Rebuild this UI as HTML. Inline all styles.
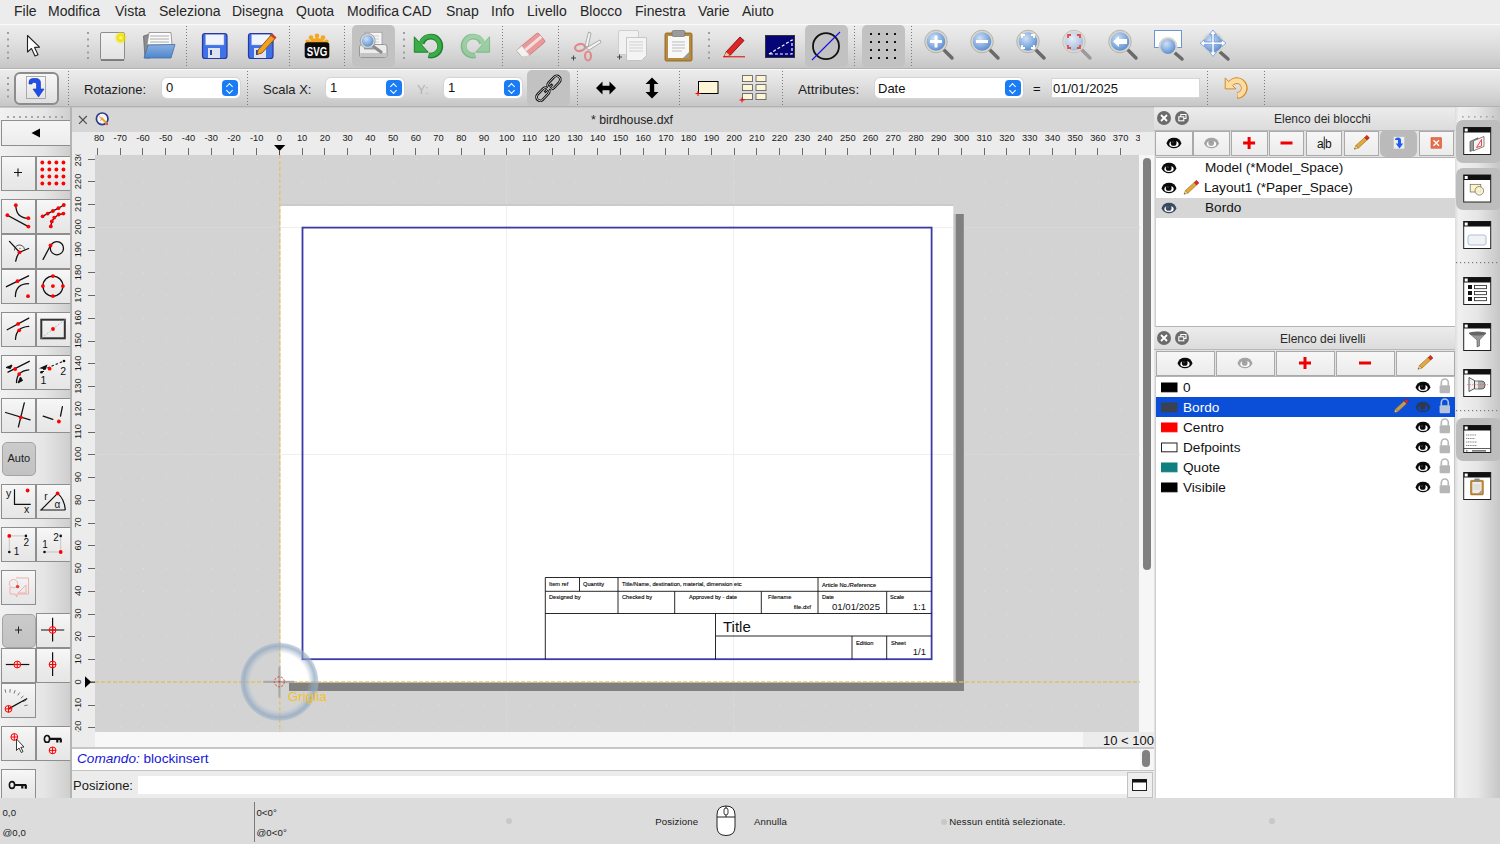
<!DOCTYPE html>
<html><head><meta charset="utf-8">
<style>
*{box-sizing:border-box;margin:0;padding:0}
html,body{width:1500px;height:844px;overflow:hidden;background:#ececec;font-family:"Liberation Sans",sans-serif;color:#222}
.a{position:absolute}
.t{position:absolute;white-space:nowrap;line-height:1}
#menubar{left:0;top:0;width:1500px;height:24px;background:#ececec}
#menubar .t{font-size:14px;top:4px;color:#262626}
#tb1{left:0;top:24px;width:1500px;height:45px;background:linear-gradient(#ededed,#e2e2e2 35%,#d2d2d2 75%,#c6c6c6);border-top:1px solid #fafafa;border-bottom:1px solid #b2b2b2}
#tb2{left:0;top:69px;width:1500px;height:38px;background:linear-gradient(#ececec,#e2e2e2 35%,#d2d2d2 75%,#c6c6c6);border-top:1px solid #fafafa;border-bottom:1px solid #b2b2b2}
.sep{position:absolute;width:0;border-left:2px dotted #9a9a9a}
.hdl{position:absolute;width:0;border-left:3px dotted #9a9a9a}
.pressed{position:absolute;background:#c4c4c4;border-radius:5px}
.spin{position:absolute;background:#fff;border-radius:5px;box-shadow:0 0 0 1px #d4d4d4}
.spinb{position:absolute;right:1px;top:1px;bottom:1px;width:17px;background:#1a7cf5;border-radius:4px}
.spinb:before,.spinb:after{content:"";position:absolute;left:5px;width:4px;height:4px;border-left:1.5px solid #fff;border-top:1.5px solid #fff}
.spinb:before{top:3.5px;transform:rotate(45deg)}
.spinb:after{bottom:3.5px;transform:rotate(225deg)}
#leftdock{left:0;top:107px;width:72px;height:693px;background:linear-gradient(90deg,#f1f1f1,#e6e6e6 60%,#cdcdcd)}
.lb{position:absolute;width:33px;height:34px;background:linear-gradient(#f6f6f6,#e9e9e9);border:1px solid #9c9c9c}
#mdi{left:72px;top:107px;width:1082px;height:691px;background:#d4d4d4}
#rightdock{left:1154px;top:107px;width:301px;height:691px;background:#e4e4e4}
#rtb{left:1455px;top:107px;width:45px;height:691px;background:linear-gradient(90deg,#ececec,#e2e2e2 50%,#c9c9c9)}
#status{left:0;top:798px;width:1500px;height:46px;background:#dcdcdc}
</style></head><body>
<!-- MENU -->
<div id="menubar" class="a">
<span class="t" style="left:14px">File</span>
<span class="t" style="left:48px">Modifica</span>
<span class="t" style="left:115px">Vista</span>
<span class="t" style="left:159px">Seleziona</span>
<span class="t" style="left:232px">Disegna</span>
<span class="t" style="left:296px">Quota</span>
<span class="t" style="left:347px;word-spacing:-1px">Modifica CAD</span>
<span class="t" style="left:446px">Snap</span>
<span class="t" style="left:491px">Info</span>
<span class="t" style="left:527px">Livello</span>
<span class="t" style="left:580px">Blocco</span>
<span class="t" style="left:635px">Finestra</span>
<span class="t" style="left:698px">Varie</span>
<span class="t" style="left:742px">Aiuto</span>
</div>
<!-- TOOLBAR 1 -->
<div id="tb1" class="a"></div>
<svg class="a" style="left:0;top:24px" width="1500" height="45" viewBox="0 24 1500 45">
<defs>
<radialGradient id="glow"><stop offset="0" stop-color="#ffff9a"/><stop offset=".45" stop-color="#f0e000"/><stop offset="1" stop-color="#f0e000" stop-opacity="0"/></radialGradient>
<linearGradient id="pg" x1="0" y1="0" x2="0" y2="1"><stop offset="0" stop-color="#f4f4f4"/><stop offset="1" stop-color="#e2e2e2"/></linearGradient>
<linearGradient id="fb" x1="0" y1="0" x2="0" y2="1"><stop offset="0" stop-color="#8ab0e0"/><stop offset="1" stop-color="#4f86cc"/></linearGradient>
<radialGradient id="lens" cx=".4" cy=".35" r=".7"><stop offset="0" stop-color="#cfe0f6"/><stop offset=".6" stop-color="#7fa9de"/><stop offset="1" stop-color="#4f82c8"/></radialGradient>
<radialGradient id="lensd" cx=".4" cy=".35" r=".7"><stop offset="0" stop-color="#e6eef8"/><stop offset=".6" stop-color="#b8cbe6"/><stop offset="1" stop-color="#9cb4d8"/></radialGradient>
<g id="mag"><line x1="0" y1="0" x2="10" y2="10" stroke="#666" stroke-width="4" stroke-linecap="round"/></g>
</defs>
<!-- handles -->
<g fill="#9d9d9d"><rect x="7" y="32" width="2" height="2"/><rect x="7" y="38.5" width="2" height="2"/><rect x="7" y="45" width="2" height="2"/><rect x="7" y="51.5" width="2" height="2"/><rect x="7" y="57" width="2" height="2"/>
<rect x="87" y="32" width="2" height="2"/><rect x="87" y="38.5" width="2" height="2"/><rect x="87" y="45" width="2" height="2"/><rect x="87" y="51.5" width="2" height="2"/><rect x="87" y="57" width="2" height="2"/>
<rect x="403" y="32" width="2" height="2"/><rect x="403" y="38.5" width="2" height="2"/><rect x="403" y="45" width="2" height="2"/><rect x="403" y="51.5" width="2" height="2"/><rect x="403" y="57" width="2" height="2"/>
<rect x="708" y="32" width="2" height="2"/><rect x="708" y="38.5" width="2" height="2"/><rect x="708" y="45" width="2" height="2"/><rect x="708" y="51.5" width="2" height="2"/><rect x="708" y="57" width="2" height="2"/>
</g>
<!-- separators -->
<g stroke="#7a7a7a" stroke-width="1" stroke-dasharray="1 2">
<line x1="186.5" y1="26" x2="186.5" y2="67"/><line x1="289.5" y1="26" x2="289.5" y2="67"/><line x1="344.5" y1="26" x2="344.5" y2="67"/>
<line x1="502.5" y1="26" x2="502.5" y2="67"/><line x1="558.5" y1="26" x2="558.5" y2="67"/>
<line x1="854.5" y1="26" x2="854.5" y2="67"/><line x1="911.5" y1="26" x2="911.5" y2="67"/>
</g>
<!-- pressed backgrounds -->
<rect x="352" y="25" width="43" height="42" rx="5" fill="#c2c2c2"/>
<rect x="805" y="25" width="43" height="42" rx="5" fill="#c2c2c2"/>
<rect x="862" y="25" width="43" height="42" rx="5" fill="#c2c2c2"/>
<!-- arrow cursor -->
<path d="M27.5 35.5 L27.5 52 L31.5 48.5 L35 56 L38 54.8 L34.6 47.4 L39.5 47.2 Z" fill="#fff" stroke="#222" stroke-width="1.1" stroke-linejoin="round"/>
<!-- new doc -->
<rect x="100.5" y="32.5" width="24" height="27.5" rx="1.5" fill="url(#pg)" stroke="#8c8c8c"/>
<line x1="101" y1="60" x2="124" y2="60" stroke="#6e6e6e" stroke-width="1.5"/>
<circle cx="120.7" cy="37.7" r="6.5" fill="url(#glow)"/>
<!-- open folder -->
<path d="M143.5 36 L150 34 L150 58 L145 58 Z" fill="#8c8c8c" stroke="#666" stroke-width=".8"/>
<path d="M149 32.5 L171 32.5 L172 45 L147 45 Z" fill="#fbfbfb" stroke="#888" stroke-width=".8"/>
<path d="M150 36 h19 M150 39 h19 M150 42 h19" stroke="#aaa" stroke-width="1"/>
<path d="M148 45 L175 44.5 L171 58 L144 58 Z" fill="url(#fb)" stroke="#3f6eaa" stroke-width=".8"/>
<!-- save -->
<g>
<rect x="202.5" y="33.5" width="24.5" height="25" rx="2.5" fill="#3f72e6" stroke="#2937a0" stroke-width="1.2"/>
<rect x="205.5" y="34.5" width="18.5" height="10.5" fill="#f2f4fb" stroke="#8aa0d8" stroke-width=".5"/>
<rect x="208" y="48" width="12" height="10" fill="#dfe3ee"/>
<rect x="210" y="50" width="2" height="5" fill="#2343b0"/>
</g>
<g>
<rect x="248.5" y="33.5" width="24.5" height="25" rx="2.5" fill="#3f72e6" stroke="#2937a0" stroke-width="1.2"/>
<rect x="251.5" y="34.5" width="18.5" height="10.5" fill="#f2f4fb" stroke="#8aa0d8" stroke-width=".5"/>
<rect x="254" y="48" width="12" height="10" fill="#dfe3ee"/>
<rect x="256" y="50" width="2" height="5" fill="#2343b0"/>
<path d="M258 50 L272 34 L276 37.5 L262 53 L257 54.5 Z" fill="#f2a020" stroke="#8a4a10" stroke-width=".9"/>
<path d="M272 34 L276 37.5 L274.5 39 L270.5 35.6 Z" fill="#e03030"/>
</g>
<!-- SVG -->
<g>
<g fill="#f6a620"><circle cx="317" cy="35.8" r="2.3"/><circle cx="311" cy="37.6" r="2.3"/><circle cx="323" cy="37.6" r="2.3"/><circle cx="307.6" cy="41.6" r="2.2"/><circle cx="326.4" cy="41.6" r="2.2"/></g>
<path d="M317 44 L317 36 M317 44 L311 38 M317 44 L323 38 M317 44 L307.6 42 M317 44 L326.4 42" stroke="#f6a620" stroke-width="2.2"/>
<path d="M309 44 A8 6 0 0 1 325 44 Z" fill="#f6a620"/>
<rect x="304.7" y="42.3" width="24.6" height="16" rx="2.8" fill="#0b0b0b"/>
<text x="317" y="55.8" font-family="Liberation Sans" font-weight="bold" font-size="13" fill="#fff" text-anchor="middle" textLength="20.5" lengthAdjust="spacingAndGlyphs">SVG</text>
</g>
<!-- print preview -->
<g>
<rect x="365" y="32.3" width="17" height="14" fill="#f6f6f6" stroke="#a0a0a0" stroke-width=".8"/>
<path d="M368 36h11M368 39h11M368 42h11" stroke="#c8c8c8" stroke-width=".8"/>
<path d="M359.5 47 Q359.5 44.5 362 44.5 L384.5 44.5 Q387 44.5 387 47 L387 55 Q387 57.5 384.5 57.5 L362 57.5 Q359.5 57.5 359.5 55 Z" fill="#ececec" stroke="#8e8e8e" stroke-width=".9"/>
<rect x="360.2" y="53" width="26.2" height="4" fill="#c4c4c4"/>
<rect x="364" y="48" width="10" height="1.4" fill="#9a9a9a"/>
<line x1="372" y1="45.5" x2="381" y2="52" stroke="#8a8a8a" stroke-width="3.2" stroke-linecap="round"/>
<circle cx="367.7" cy="40.9" r="6.6" fill="url(#lens)" stroke="#d8d8d0" stroke-width="1.6"/>
<circle cx="367.7" cy="40.9" r="7.5" fill="none" stroke="#8a8f96" stroke-width=".7"/>
</g>
<!-- undo -->
<g>
<path d="M421.6 43.6 A9.5 9.5 0 1 1 428.5 55.3" fill="none" stroke="#1f8030" stroke-width="5.8"/>
<path d="M414.3 36.8 L414.3 52.2 L428.2 52.2 Z" fill="#3aac48" stroke="#1f8030" stroke-width="1" stroke-linejoin="round"/>
<path d="M420.8 44.5 A9.5 9.5 0 1 1 429 55.3" fill="none" stroke="#3aac48" stroke-width="3.8"/>
</g>
<g transform="translate(903.85 0) scale(-1 1)" opacity=".5">
<path d="M421.6 43.6 A9.5 9.5 0 1 1 428.5 55.3" fill="none" stroke="#2a9a3a" stroke-width="5.8"/>
<path d="M414.3 36.8 L414.3 52.2 L428.2 52.2 Z" fill="#5cc06a" stroke="#2a9a3a" stroke-width="1" stroke-linejoin="round"/>
<path d="M420.8 44.5 A9.5 9.5 0 1 1 429 55.3" fill="none" stroke="#5cc06a" stroke-width="3.8"/>
</g>
<!-- eraser -->
<g transform="rotate(-40 531 46)"><rect x="517" y="40" width="28" height="12" rx="2" fill="#e89a9a" stroke="#c77" stroke-width=".8"/><rect x="517" y="40" width="7" height="12" fill="#f2f2f2" stroke="#bbb" stroke-width=".6"/><rect x="524" y="44" width="21" height="3" fill="#f6dede"/></g>
<ellipse cx="531" cy="57" rx="10" ry="1.5" fill="#d0d0d0"/>
<!-- scissors -->
<g fill="none" stroke="#e08a8a" stroke-width="2.2"><ellipse cx="580" cy="47.5" rx="5" ry="3.5" transform="rotate(-10 580 47.5)"/><ellipse cx="588" cy="56" rx="3" ry="4.5"/></g>
<path d="M585 46 L588.5 32 L591 33 L588 47 Z M586 48 L600 40 L601 42.5 L589 50 Z" fill="#f4f4f4" stroke="#9a9a9a" stroke-width=".8"/>
<path d="M571 58 h5 M573.5 55.5 v5" stroke="#444" stroke-width="1"/>
<!-- copy -->
<rect x="618.5" y="30.5" width="20" height="24" rx="1.5" fill="#f1f1f1" stroke="#c6c6c6" stroke-width=".8"/>
<path d="M626.5 37.5 h20 v18 l-5 5 h-15 Z" fill="#f4f4f4" stroke="#bdbdbd" stroke-width=".8"/>
<path d="M629 42 h14 M629 45 h14 M629 48 h14 M629 51 h14" stroke="#cfcfcf" stroke-width="1"/>
<path d="M617 57 h5 M619.5 54.5 v5" stroke="#444" stroke-width="1"/>
<!-- paste -->
<rect x="665" y="33" width="27" height="28" rx="1.5" fill="#b98a3c" stroke="#7e5a20" stroke-width=".8"/>
<rect x="668" y="36" width="21" height="22" fill="#f8f8f8"/>
<rect x="672" y="30.5" width="13" height="6" rx="1.5" fill="#9a9a9a" stroke="#666" stroke-width=".6"/>
<path d="M672 42 h13 M672 45 h13 M672 48 h13 M672 51 h10" stroke="#bbb" stroke-width="1"/>
<path d="M683 58 L689 52 L689 58 Z" fill="#9a9a9a"/>
<!-- pencil -->
<path d="M726 52 L740 37 L744 40.5 L730 55.5 L724.5 56.5 Z" fill="#e02424" stroke="#7a1010" stroke-width=".9"/>
<path d="M724.5 56.5 L726 52 L730 55.5 Z" fill="#f0c890"/>
<line x1="723" y1="56.8" x2="745" y2="56.8" stroke="#e00000" stroke-width="1"/>
<!-- dim box -->
<rect x="765.5" y="35.5" width="29" height="22" fill="#050575" stroke="#333" stroke-width="1"/>
<path d="M769 54 L792 40 L792 54 Z" fill="none" stroke="#fff" stroke-width="1.2" stroke-dasharray="3 2"/>
<!-- circle with line -->
<circle cx="826" cy="46.2" r="13" fill="none" stroke="#111" stroke-width="1.8"/>
<line x1="812" y1="60" x2="840" y2="32" stroke="#1010ee" stroke-width="1.1"/>
<!-- grid -->
<g fill="#111">
<rect x="870" y="33" width="2" height="2"/><rect x="878" y="33" width="2" height="2"/><rect x="886" y="33" width="2" height="2"/><rect x="894" y="33" width="2" height="2"/>
<rect x="870" y="41" width="2" height="2"/><rect x="878" y="41" width="2" height="2"/><rect x="886" y="41" width="2" height="2"/><rect x="894" y="41" width="2" height="2"/>
<rect x="870" y="49" width="2" height="2"/><rect x="878" y="49" width="2" height="2"/><rect x="886" y="49" width="2" height="2"/><rect x="894" y="49" width="2" height="2"/>
<rect x="870" y="57" width="2" height="2"/><rect x="878" y="57" width="2" height="2"/><rect x="886" y="57" width="2" height="2"/><rect x="894" y="57" width="2" height="2"/>
</g>
<!-- zoom icons -->
<g>
<line x1="944" y1="50" x2="952" y2="58" stroke="#6a6a6a" stroke-width="3.5" stroke-linecap="round"/>
<circle cx="936" cy="41.5" r="10.3" fill="url(#lens)" stroke="#d6d6cc" stroke-width="2"/>
<circle cx="936" cy="41.5" r="11.3" fill="none" stroke="#9a9a90" stroke-width=".6"/>
<path d="M930 41.5 h12 M936 35.5 v12" stroke="#fff" stroke-width="3"/>
</g>
<g>
<line x1="990" y1="50" x2="998" y2="58" stroke="#6a6a6a" stroke-width="3.5" stroke-linecap="round"/>
<circle cx="982" cy="41.5" r="10.3" fill="url(#lens)" stroke="#d6d6cc" stroke-width="2"/>
<circle cx="982" cy="41.5" r="11.3" fill="none" stroke="#9a9a90" stroke-width=".6"/>
<path d="M976 41.5 h12" stroke="#fff" stroke-width="3"/>
</g>
<g>
<line x1="1036" y1="50" x2="1044" y2="58" stroke="#6a6a6a" stroke-width="3.5" stroke-linecap="round"/>
<circle cx="1028" cy="41.5" r="10.3" fill="url(#lens)" stroke="#d6d6cc" stroke-width="2"/>
<circle cx="1028" cy="41.5" r="11.3" fill="none" stroke="#9a9a90" stroke-width=".6"/>
<path d="M1022 38 v-3 h3 M1031 35 h3 v3 M1034 45 v3 h-3 M1025 48 h-3 v-3" fill="none" stroke="#fff" stroke-width="1.8"/>
</g>
<g>
<line x1="1082" y1="50" x2="1090" y2="58" stroke="#9a9a9a" stroke-width="3.5" stroke-linecap="round"/>
<circle cx="1074" cy="41.5" r="10.3" fill="url(#lensd)" stroke="#dcdcd4" stroke-width="2"/>
<circle cx="1074" cy="41.5" r="11.3" fill="none" stroke="#b0b0a8" stroke-width=".6"/>
<path d="M1068 38 v-3 h3 M1077 35 h3 v3 M1080 45 v3 h-3 M1071 48 h-3 v-3" fill="none" stroke="#e84a4a" stroke-width="1.8"/>
</g>
<g>
<line x1="1128" y1="50" x2="1136" y2="58" stroke="#6a6a6a" stroke-width="3.5" stroke-linecap="round"/>
<circle cx="1120" cy="41.5" r="10.3" fill="url(#lens)" stroke="#d6d6cc" stroke-width="2"/>
<circle cx="1120" cy="41.5" r="11.3" fill="none" stroke="#9a9a90" stroke-width=".6"/>
<path d="M1113 41.5 L1119 36 L1119 39 L1127 39 L1127 44 L1119 44 L1119 47 Z" fill="#fff"/>
</g>
<g>
<rect x="1154.5" y="30.5" width="27" height="17" fill="#fff" stroke="#6f95d0" stroke-width="1"/>
<line x1="1175" y1="53" x2="1182" y2="59" stroke="#6a6a6a" stroke-width="3.5" stroke-linecap="round"/>
<circle cx="1168" cy="46.4" r="8.5" fill="url(#lens)" stroke="#d6d6cc" stroke-width="2"/>
</g>
<g>
<line x1="1220" y1="52" x2="1228" y2="59" stroke="#6a6a6a" stroke-width="3.5" stroke-linecap="round"/>
<circle cx="1213" cy="43.2" r="10" fill="url(#lens)" stroke="#d6d6cc" stroke-width="2"/>
<path d="M1213 30 L1209.5 34.5 L1211.8 34.5 L1211.8 42 L1204.5 42 L1204.5 39.7 L1200 43.2 L1204.5 46.7 L1204.5 44.4 L1211.8 44.4 L1211.8 52 L1209.5 52 L1213 56.5 L1216.5 52 L1214.2 52 L1214.2 44.4 L1221.5 44.4 L1221.5 46.7 L1226 43.2 L1221.5 39.7 L1221.5 42 L1214.2 42 L1214.2 34.5 L1216.5 34.5 Z" fill="#fff" stroke="#6f95d0" stroke-width=".8"/>
</g>
</svg>

<!-- TOOLBAR 2 -->
<div id="tb2" class="a"></div>
<svg class="a" style="left:0;top:69px" width="1500" height="38" viewBox="0 69 1500 38">
<defs>
<linearGradient id="btng" x1="0" y1="0" x2="0" y2="1"><stop offset="0" stop-color="#f7f7f7"/><stop offset=".5" stop-color="#ececec"/><stop offset="1" stop-color="#dedede"/></linearGradient>
<linearGradient id="pageg" x1="0" y1="0" x2="0" y2="1"><stop offset="0" stop-color="#f8f8f8"/><stop offset="1" stop-color="#e4e4e4"/></linearGradient>
</defs>
<g fill="#9d9d9d"><rect x="7" y="77" width="2" height="2"/><rect x="7" y="83" width="2" height="2"/><rect x="7" y="89" width="2" height="2"/><rect x="7" y="95.5" width="2" height="2"/></g>
<g stroke="#7a7a7a" stroke-width="1" stroke-dasharray="1 2">
<line x1="68.5" y1="71" x2="68.5" y2="106"/><line x1="247.5" y1="71" x2="247.5" y2="106"/><line x1="577.5" y1="71" x2="577.5" y2="106"/>
<line x1="679.5" y1="71" x2="679.5" y2="106"/><line x1="782.5" y1="71" x2="782.5" y2="106"/><line x1="1207.5" y1="71" x2="1207.5" y2="106"/><line x1="1264.5" y1="71" x2="1264.5" y2="106"/>
</g>
<!-- bordered button -->
<rect x="15" y="73" width="43" height="31" rx="5" fill="url(#btng)" stroke="#8c8c8c" stroke-width="2"/>
<rect x="26.5" y="76.5" width="19" height="22" fill="url(#pageg)" stroke="#9a9a9a" stroke-width=".8"/>
<path d="M29 82 Q29 78.5 33 78.5 L36 78.5 Q40.5 78.5 40.5 83 L40.5 89 L44 89 L38.5 97 L33 89 L36.5 89 L36.5 84 Q36.5 82.5 35 82.5 L33 82.5 Q32 82.5 32 84 L29 84 Z" fill="#1f4fe8" stroke="#1535b8" stroke-width=".6"/>
<!-- pressed link -->
<rect x="527" y="70" width="43" height="36" rx="5" fill="#c2c2c2"/>
<g transform="translate(548.4 88.35) scale(.87) translate(-548.4 -88.35) rotate(-46.5 548.4 88.35)">
<rect x="530.4" y="84.1" width="17.5" height="8.5" rx="4.25" fill="none" stroke="#111" stroke-width="3"/>
<rect x="549" y="84.1" width="17.5" height="8.5" rx="4.25" fill="none" stroke="#111" stroke-width="3"/>
<line x1="542" y1="88.35" x2="555" y2="88.35" stroke="#111" stroke-width="3"/>
<rect x="530.4" y="84.1" width="17.5" height="8.5" rx="4.25" fill="none" stroke="#e8e8e8" stroke-width=".9"/>
<rect x="549" y="84.1" width="17.5" height="8.5" rx="4.25" fill="none" stroke="#e8e8e8" stroke-width=".9"/>
<line x1="543.5" y1="88.35" x2="553.5" y2="88.35" stroke="#e8e8e8" stroke-width=".9"/>
</g>
<!-- arrows -->
<path d="M596 88 L602.5 81.5 L602.5 85.8 L609.5 85.8 L609.5 81.5 L616 88 L609.5 94.5 L609.5 90.2 L602.5 90.2 L602.5 94.5 Z" fill="#000"/>
<path d="M652 77.5 L658.5 84 L654.2 84 L654.2 92 L658.5 92 L652 98.5 L645.5 92 L649.8 92 L649.8 84 L645.5 84 Z" fill="#000"/>
<!-- rect -->
<rect x="698.5" y="81.5" width="19.5" height="12" fill="#fdf5d6" stroke="#000" stroke-width="1"/>
<path d="M695.5 93.5 h5 M698 91 v5" stroke="#e00" stroke-width="1"/>
<g fill="#fdf5d6" stroke="#555" stroke-width=".8">
<rect x="742.4" y="75.6" width="10" height="6"/><rect x="756" y="75.6" width="10" height="6"/>
<rect x="742.4" y="84.6" width="10" height="6"/><rect x="756" y="84.6" width="10" height="6"/>
<rect x="742.4" y="93.6" width="10" height="6"/><rect x="756" y="93.6" width="10" height="6"/>
</g>
<path d="M739.5 100 h5 M742 97.5 v5" stroke="#e00" stroke-width="1"/>
<!-- undo orange -->
<path d="M1231.3 83.2 A7.4 7.4 0 1 1 1237 95.4" fill="none" stroke="#d08a30" stroke-width="6.6"/>
<path d="M1225.2 77.9 L1225.2 88.9 L1235.9 88.9 Z" fill="#fddca0" stroke="#d08a30" stroke-width="1" stroke-linejoin="round"/>
<path d="M1230.3 84.2 A7.4 7.4 0 1 1 1237.5 95.4" fill="none" stroke="#fddca0" stroke-width="4.6"/>
</svg>
<div class="t" style="left:84px;top:83px;font-size:13px;color:#1e1e1e">Rotazione:</div>
<div class="spin" style="left:162px;top:78px;width:78px;height:20px"><div class="spinb" style="top:2px;bottom:2px;right:2px;width:16px"></div></div>
<div class="t" style="left:166px;top:81px;font-size:13px;color:#111">0</div>
<div class="t" style="left:263px;top:83px;font-size:13px;color:#1e1e1e">Scala X:</div>
<div class="spin" style="left:326px;top:78px;width:78px;height:20px"><div class="spinb" style="top:2px;bottom:2px;right:2px;width:16px"></div></div>
<div class="t" style="left:330px;top:81px;font-size:13px;color:#111">1</div>
<div class="t" style="left:417px;top:83px;font-size:13px;color:#b4b4b4">Y:</div>
<div class="spin" style="left:444px;top:78px;width:78px;height:20px"><div class="spinb" style="top:2px;bottom:2px;right:2px;width:16px"></div></div>
<div class="t" style="left:448px;top:81px;font-size:13px;color:#111">1</div>
<div class="t" style="left:798px;top:82.5px;font-size:13.6px;color:#1e1e1e">Attributes:</div>
<div class="spin" style="left:875px;top:78px;width:148px;height:20px"><div class="spinb" style="top:2px;bottom:2px;right:2px;width:16px"></div></div>
<div class="t" style="left:878px;top:82px;font-size:13px;color:#111">Date</div>
<div class="t" style="left:1033px;top:82px;font-size:13px;color:#111">=</div>
<div class="a" style="left:1051px;top:78px;width:149px;height:20px;background:#fff;border:1px solid #d6d6d6"></div>
<div class="t" style="left:1053px;top:82px;font-size:13px;color:#111">01/01/2025</div>

<!-- LEFT DOCK -->
<div id="leftdock" class="a"></div>
<!--LSTART-->
<div class="a" style="left:0;top:107px;width:71px;height:1px;background:#c8c8c8"></div>
<div class="a" style="left:1px;top:120px;width:70px;height:26px;background:linear-gradient(#f6f6f6,#ececec);border:1px solid #8e8e8e"></div>
<div class="a" style="left:1px;top:156px;width:35px;height:35px;background:linear-gradient(#f7f7f7,#ebebeb 60%,#e6e6e6);border:1px solid #8e8e8e"></div>
<div class="a" style="left:36px;top:156px;width:35px;height:35px;background:linear-gradient(#f7f7f7,#ebebeb 60%,#e6e6e6);border:1px solid #8e8e8e"></div>
<div class="a" style="left:1px;top:199px;width:35px;height:35px;background:linear-gradient(#f7f7f7,#ebebeb 60%,#e6e6e6);border:1px solid #8e8e8e"></div>
<div class="a" style="left:36px;top:199px;width:35px;height:35px;background:linear-gradient(#f7f7f7,#ebebeb 60%,#e6e6e6);border:1px solid #8e8e8e"></div>
<div class="a" style="left:1px;top:234px;width:35px;height:35px;background:linear-gradient(#f7f7f7,#ebebeb 60%,#e6e6e6);border:1px solid #8e8e8e"></div>
<div class="a" style="left:36px;top:234px;width:35px;height:35px;background:linear-gradient(#f7f7f7,#ebebeb 60%,#e6e6e6);border:1px solid #8e8e8e"></div>
<div class="a" style="left:1px;top:269px;width:35px;height:35px;background:linear-gradient(#f7f7f7,#ebebeb 60%,#e6e6e6);border:1px solid #8e8e8e"></div>
<div class="a" style="left:36px;top:269px;width:35px;height:35px;background:linear-gradient(#f7f7f7,#ebebeb 60%,#e6e6e6);border:1px solid #8e8e8e"></div>
<div class="a" style="left:1px;top:312px;width:35px;height:35px;background:linear-gradient(#f7f7f7,#ebebeb 60%,#e6e6e6);border:1px solid #8e8e8e"></div>
<div class="a" style="left:36px;top:312px;width:35px;height:35px;background:linear-gradient(#f7f7f7,#ebebeb 60%,#e6e6e6);border:1px solid #8e8e8e"></div>
<div class="a" style="left:1px;top:355px;width:35px;height:35px;background:linear-gradient(#f7f7f7,#ebebeb 60%,#e6e6e6);border:1px solid #8e8e8e"></div>
<div class="a" style="left:36px;top:355px;width:35px;height:35px;background:linear-gradient(#f7f7f7,#ebebeb 60%,#e6e6e6);border:1px solid #8e8e8e"></div>
<div class="a" style="left:1px;top:398px;width:35px;height:35px;background:linear-gradient(#f7f7f7,#ebebeb 60%,#e6e6e6);border:1px solid #8e8e8e"></div>
<div class="a" style="left:36px;top:398px;width:35px;height:35px;background:linear-gradient(#f7f7f7,#ebebeb 60%,#e6e6e6);border:1px solid #8e8e8e"></div>
<div class="a" style="left:1.5px;top:441.5px;width:34px;height:34px;background:linear-gradient(#cbcbcb,#c2c2c2);border:1px solid #a4a4a4;border-radius:5px"></div>
<div class="a" style="left:1px;top:484px;width:35px;height:35px;background:linear-gradient(#f7f7f7,#ebebeb 60%,#e6e6e6);border:1px solid #8e8e8e"></div>
<div class="a" style="left:36px;top:484px;width:35px;height:35px;background:linear-gradient(#f7f7f7,#ebebeb 60%,#e6e6e6);border:1px solid #8e8e8e"></div>
<div class="a" style="left:1px;top:527px;width:35px;height:35px;background:linear-gradient(#f7f7f7,#ebebeb 60%,#e6e6e6);border:1px solid #8e8e8e"></div>
<div class="a" style="left:36px;top:527px;width:35px;height:35px;background:linear-gradient(#f7f7f7,#ebebeb 60%,#e6e6e6);border:1px solid #8e8e8e"></div>
<div class="a" style="left:1px;top:570px;width:35px;height:35px;background:linear-gradient(#f7f7f7,#ebebeb 60%,#e6e6e6);border:1px solid #8e8e8e"></div>
<div class="a" style="left:1.5px;top:613.5px;width:34px;height:34px;background:linear-gradient(#cbcbcb,#c2c2c2);border:1px solid #a4a4a4;border-radius:5px"></div>
<div class="a" style="left:36px;top:613px;width:35px;height:35px;background:linear-gradient(#f7f7f7,#ebebeb 60%,#e6e6e6);border:1px solid #8e8e8e"></div>
<div class="a" style="left:1px;top:648px;width:35px;height:35px;background:linear-gradient(#f7f7f7,#ebebeb 60%,#e6e6e6);border:1px solid #8e8e8e"></div>
<div class="a" style="left:36px;top:648px;width:35px;height:35px;background:linear-gradient(#f7f7f7,#ebebeb 60%,#e6e6e6);border:1px solid #8e8e8e"></div>
<div class="a" style="left:1px;top:683px;width:35px;height:35px;background:linear-gradient(#f7f7f7,#ebebeb 60%,#e6e6e6);border:1px solid #8e8e8e"></div>
<div class="a" style="left:1px;top:726px;width:35px;height:35px;background:linear-gradient(#f7f7f7,#ebebeb 60%,#e6e6e6);border:1px solid #8e8e8e"></div>
<div class="a" style="left:36px;top:726px;width:35px;height:35px;background:linear-gradient(#f7f7f7,#ebebeb 60%,#e6e6e6);border:1px solid #8e8e8e"></div>
<div class="a" style="left:1px;top:769px;width:35px;height:31px;background:linear-gradient(#f7f7f7,#ebebeb 60%,#e6e6e6);border:1px solid #8e8e8e"></div>
<div class="t" style="left:7.5px;top:453px;font-size:11px;color:#222">Auto</div>
<svg class="a" style="left:0;top:107px" width="72" height="691" viewBox="0 107 72 691">
<g fill="#a6a6a6"><rect x="7" y="116" width="2" height="2"/><rect x="13" y="116" width="2" height="2"/><rect x="19" y="116" width="2" height="2"/><rect x="25" y="116" width="2" height="2"/><rect x="31" y="116" width="2" height="2"/><rect x="37" y="116" width="2" height="2"/><rect x="43" y="116" width="2" height="2"/><rect x="49" y="116" width="2" height="2"/><rect x="55" y="116" width="2" height="2"/><rect x="61" y="116" width="2" height="2"/></g>
<path d="M31.5 133 L40 128.5 L40 137.5 Z" fill="#000"/>
<g transform="translate(1 156)"><path d="M13 16.5h8M17 12.5v8" stroke="#111" stroke-width="1.1"/></g>
<g transform="translate(36 156)"><circle cx="6.3" cy="6.5" r="1.9" fill="#f00"/><circle cx="6.3" cy="13.5" r="1.9" fill="#f00"/><circle cx="6.3" cy="20.5" r="1.9" fill="#f00"/><circle cx="6.3" cy="27.5" r="1.9" fill="#f00"/><circle cx="13.35" cy="6.5" r="1.9" fill="#f00"/><circle cx="13.35" cy="13.5" r="1.9" fill="#f00"/><circle cx="13.35" cy="20.5" r="1.9" fill="#f00"/><circle cx="13.35" cy="27.5" r="1.9" fill="#f00"/><circle cx="20.4" cy="6.5" r="1.9" fill="#f00"/><circle cx="20.4" cy="13.5" r="1.9" fill="#f00"/><circle cx="20.4" cy="20.5" r="1.9" fill="#f00"/><circle cx="20.4" cy="27.5" r="1.9" fill="#f00"/><circle cx="27.45" cy="6.5" r="1.9" fill="#f00"/><circle cx="27.45" cy="13.5" r="1.9" fill="#f00"/><circle cx="27.45" cy="20.5" r="1.9" fill="#f00"/><circle cx="27.45" cy="27.5" r="1.9" fill="#f00"/></g>
<g transform="translate(1 199)"><path d="M14.8 6.2 Q15 19 27.4 19.2 M6.4 16.2 L27.4 27.6" stroke="#111" stroke-width="1.3" fill="none" stroke-linecap="round"/><circle cx="14.8" cy="6.2" r="1.9" fill="#f00"/><circle cx="27.4" cy="19.2" r="1.9" fill="#f00"/><circle cx="6.4" cy="16.2" r="1.9" fill="#f00"/><circle cx="27.4" cy="27.6" r="1.9" fill="#f00"/></g>
<g transform="translate(36 199)"><polyline points="6.6,17.3 11.7,14.6 16.9,12 22.4,9.2 27.8,6" stroke="#111" stroke-width="1.3" fill="none" stroke-linecap="round"/><polyline points="14.8,27.4 15.8,22.4 18.3,18.6 22.7,15.5 27.4,14.6" stroke="#111" stroke-width="1.3" fill="none" stroke-linecap="round"/><circle cx="6.6" cy="17.3" r="1.9" fill="#f00"/><circle cx="11.7" cy="14.6" r="1.9" fill="#f00"/><circle cx="16.9" cy="12" r="1.9" fill="#f00"/><circle cx="22.4" cy="9.2" r="1.9" fill="#f00"/><circle cx="27.8" cy="6" r="1.9" fill="#f00"/><circle cx="14.8" cy="27.4" r="1.9" fill="#f00"/><circle cx="15.8" cy="22.4" r="1.9" fill="#f00"/><circle cx="18.3" cy="18.6" r="1.9" fill="#f00"/><circle cx="22.7" cy="15.5" r="1.9" fill="#f00"/><circle cx="27.4" cy="14.6" r="1.9" fill="#f00"/></g>
<g transform="translate(1 234)"><path d="M8.5 7.4 L18.5 18.3 L27.6 14.5 M18.5 18.3 Q15.5 22 14.7 27.2" stroke="#111" stroke-width="1.3" fill="none" stroke-linecap="round"/><path d="M13.5 16.5 A5 5 0 0 1 23.5 15.5" stroke="#111" stroke-width=".7" fill="none"/><circle cx="18.5" cy="18.3" r="1.9" fill="#f00"/><circle cx="19" cy="14.5" r=".5" fill="#111"/></g>
<g transform="translate(36 234)"><circle cx="20.9" cy="14.2" r="6.6" stroke="#111" stroke-width="1.3" fill="none" stroke-linecap="round"/><path d="M7.1 25.4 L14.5 11.5" stroke="#111" stroke-width="1.3" fill="none" stroke-linecap="round"/><circle cx="14.5" cy="11.5" r="1.9" fill="#f00"/></g>
<g transform="translate(1 269)"><path d="M5.4 17.7 L27.6 6.8 M14.4 27.6 Q14.4 15 27.6 14.7" stroke="#111" stroke-width="1.3" fill="none" stroke-linecap="round"/><circle cx="16.5" cy="12.2" r="1.9" fill="#f00"/><circle cx="27" cy="27.2" r="1.9" fill="#f00"/></g>
<g transform="translate(36 269)"><circle cx="16.9" cy="17.1" r="10" stroke="#111" stroke-width="1.3" fill="none" stroke-linecap="round"/><circle cx="16.9" cy="17.1" r="1.9" fill="#f00"/><circle cx="16.9" cy="7.1" r="1.9" fill="#f00"/><circle cx="16.9" cy="27.1" r="1.9" fill="#f00"/><circle cx="6.9" cy="17.1" r="1.9" fill="#f00"/><circle cx="26.9" cy="17.1" r="1.9" fill="#f00"/></g>
<g transform="translate(1 312)"><path d="M6.2 17.8 L27.8 6.1 M14.5 27.4 Q15 15 27.8 14.3" stroke="#111" stroke-width="1.3" fill="none" stroke-linecap="round"/><circle cx="17.1" cy="11.9" r="1.9" fill="#f00"/><circle cx="18.2" cy="18.3" r="1.9" fill="#f00"/></g>
<g transform="translate(36 312)"><rect x="5.3" y="7.7" width="23.5" height="18.6" fill="none" stroke="#333" stroke-width="2"/><path d="M5.3 26.3 L28.8 7.7" stroke="#aaa" stroke-width=".8" stroke-dasharray="2 1.5"/><circle cx="17" cy="17" r="1.9" fill="#f00"/></g>
<g transform="translate(1 355)"><path d="M7 17.2 L28.3 6.3 M15.5 27.6 Q15.5 16 27.8 14.8" stroke="#111" stroke-width="1.3" fill="none" stroke-linecap="round"/><path d="M5 12.5 L11 10 L9.5 13.5 Z M17 28 L19.5 22 L21.5 25.5 Z" fill="#111" stroke="#111" stroke-width="1"/><circle cx="14.2" cy="14" r="1.9" fill="#f00"/><circle cx="18.2" cy="19.1" r="1.9" fill="#f00"/></g>
<g transform="translate(36 355)"><path d="M7.2 14.8 L28 6" stroke="#111" stroke-width="1.1" stroke-dasharray="2.5 2"/><path d="M5 13 L10.5 10.5 L9.5 13.8 Z M5 16.5 h3" stroke="#111" stroke-width="1.2" fill="#111"/><circle cx="13.6" cy="13.7" r="1.9" fill="#f00"/><circle cx="28" cy="6" r="1.3" fill="#111"/><circle cx="5.5" cy="17.3" r="1.3" fill="#111"/><text x="4.5" y="29.4" font-family="Liberation Sans" font-size="10.5" fill="#111">1</text><text x="24.3" y="19.8" font-family="Liberation Sans" font-size="10.5" fill="#111">2</text></g>
<g transform="translate(1 398)"><path d="M4.6 14.5 L29.1 21.9 M23.3 4.9 L17.4 28.9" stroke="#111" stroke-width="1.3" fill="none" stroke-linecap="round"/><circle cx="19.8" cy="19.3" r="1.9" fill="#f00"/></g>
<g transform="translate(36 398)"><path d="M7.2 18.2 L16.8 21.4 M26.4 8.6 L24.5 18.2" stroke="#111" stroke-width="1.3" fill="none" stroke-linecap="round"/><circle cx="22.9" cy="23.5" r="1.9" fill="#f00"/></g>
<g transform="translate(1 484)"><path d="M13.5 5.3 V20.4 H29.7" stroke="#111" stroke-width="1.2" fill="none"/><text x="5" y="12.8" font-family="Liberation Sans" font-size="10.5" fill="#111">y</text><text x="23" y="29.3" font-family="Liberation Sans" font-size="10.5" fill="#111">x</text><circle cx="26.6" cy="6.5" r="1.9" fill="#f00"/></g>
<g transform="translate(36 484)"><path d="M29.3 26 H5 L21.6 9.4 M21.6 9.4 Q28.5 15 29.3 26" stroke="#111" stroke-width="1.2" fill="none"/><text x="8.2" y="16.3" font-family="Liberation Sans" font-size="10" fill="#111">r</text><text x="18.5" y="23.5" font-family="Liberation Sans" font-size="10" fill="#111">α</text><circle cx="21.6" cy="9.4" r="1.9" fill="#f00"/></g>
<g transform="translate(1 527)"><path d="M8.3 8.9 H24.9 M8.3 8.9 V25" stroke="#bbb" stroke-width=".8"/><circle cx="8.3" cy="8.9" r="1.9" fill="#f00"/><circle cx="8.3" cy="25" r="1.3" fill="#111"/><circle cx="24.9" cy="8.9" r="1.3" fill="#111"/><text x="12.8" y="28" font-family="Liberation Sans" font-size="10" fill="#111">1</text><text x="22.5" y="19" font-family="Liberation Sans" font-size="10" fill="#111">2</text></g>
<g transform="translate(36 527)"><path d="M8.5 25 H24.7 M24.7 8.9 V25" stroke="#bbb" stroke-width=".8"/><circle cx="24.7" cy="25" r="1.9" fill="#f00"/><circle cx="8.5" cy="25" r="1.3" fill="#111"/><circle cx="24.7" cy="8.9" r="1.3" fill="#111"/><text x="6.3" y="21" font-family="Liberation Sans" font-size="10" fill="#111">1</text><text x="17.2" y="14" font-family="Liberation Sans" font-size="10" fill="#111">2</text></g>
<g transform="translate(1 570)"><circle cx="12.5" cy="13.7" r="4.2" fill="none" stroke="#f0a8a8" stroke-width=".9"/><path d="M9 17 V24 H14 L16 27 L16 24 H27.5 V8 H15" fill="none" stroke="#f0a8a8" stroke-width=".9"/><path d="M17 23 L25 15 V23 Z" fill="none" stroke="#f0a8a8" stroke-width=".9"/><circle cx="16.6" cy="16.6" r="1.7" fill="#f03030"/></g>
<g transform="translate(1 613)"><path d="M14 17h7M17.5 13.5v7" stroke="#222" stroke-width="1"/></g>
<g transform="translate(36 613)"><path d="M5 17 H28.2 M16.6 4.7 V28.5" stroke="#111" stroke-width="1.2"/><circle cx="16.6" cy="17" r="3.4" fill="none" stroke="#f00" stroke-width="1"/><path d="M13.200000000000001 17h6.8M16.6 13.6v6.8" stroke="#f00" stroke-width="1"/></g>
<g transform="translate(1 648)"><path d="M4.8 16.5 H28.3" stroke="#111" stroke-width="1.2"/><circle cx="16.3" cy="16.5" r="3.4" fill="none" stroke="#f00" stroke-width="1"/><path d="M12.9 16.5h6.8M16.3 13.1v6.8" stroke="#f00" stroke-width="1"/></g>
<g transform="translate(36 648)"><path d="M16.6 4.3 V28" stroke="#111" stroke-width="1.2"/><circle cx="16.6" cy="16.5" r="3.4" fill="none" stroke="#f00" stroke-width="1"/><path d="M13.200000000000001 16.5h6.8M16.6 13.1v6.8" stroke="#f00" stroke-width="1"/></g>
<g transform="translate(1 683)"><path d="M4.7 9.7 L4.1 6.3 M8.9 9.6 L9.2 6.1 M13.0 10.5 L14.2 7.2 M16.7 12.4 L18.7 9.5 M19.8 15.2 L22.4 13.0 M22.0 18.7 L25.2 17.3 M23.3 22.7 L26.7 22.1 " stroke="#777" stroke-width="1"/><path d="M7.5 25.9 L26.2 15.5" stroke="#111" stroke-width="1.3"/><circle cx="7.5" cy="25.9" r="3.4" fill="none" stroke="#f00" stroke-width="1"/><path d="M4.1 25.9h6.8M7.5 22.5v6.8" stroke="#f00" stroke-width="1"/></g>
<g transform="translate(1 726)"><circle cx="13.3" cy="11" r="3.4" fill="none" stroke="#f00" stroke-width="1"/><path d="M9.9 11h6.8M13.3 7.6v6.8" stroke="#f00" stroke-width="1"/><path d="M15.5 13 L15.5 24.5 L18 22 L20.3 26.5 L22 25.6 L19.8 21.3 L23 21 Z" fill="#fff" stroke="#222" stroke-width=".9"/></g>
<g transform="translate(36 726)"><g transform="translate(7.8 9.4)"><ellipse cx="3.2" cy="3.5" rx="2.6" ry="3.4" fill="none" stroke="#111" stroke-width="1.6"/><path d="M5.8 3.5 H17.5 M13.5 3.5 V7 M17 3.5 V7.2" stroke="#111" stroke-width="2.2"/></g><circle cx="16.6" cy="24.4" r="3.4" fill="none" stroke="#f00" stroke-width="1"/><path d="M13.200000000000001 24.4h6.8M16.6 21.0v6.8" stroke="#f00" stroke-width="1"/></g>
<g transform="translate(1 769)"><g transform="translate(7.8 12.5)"><ellipse cx="3.2" cy="3.5" rx="2.6" ry="3.4" fill="none" stroke="#111" stroke-width="1.6"/><path d="M5.8 3.5 H17.5 M13.5 3.5 V7 M17 3.5 V7.2" stroke="#111" stroke-width="2.2"/></g></g>
</svg>
<!--LEND-->
<!-- MDI -->
<div id="mdi" class="a"></div>
<!--MDISTART-->
<div class="a" style="left:70px;top:107px;width:2px;height:691px;background:#b4b4b4"></div>
<div class="a" style="left:72px;top:107px;width:1082px;height:25px;background:#d6d6d6;border-top:1px solid #c8c8c8"></div>
<div class="a" style="left:72px;top:132px;width:1082px;height:23px;background:#ececec"></div>
<div class="a" style="left:72px;top:155px;width:23px;height:577px;background:#ececec"></div>
<div class="a" style="left:95px;top:155px;width:1045px;height:577px;background:#d3d3d3;overflow:hidden" id="canvas"></div>
<div class="a" style="left:1139px;top:155px;width:15px;height:577px;background:#f6f6f6"></div>
<div class="a" style="left:1143px;top:158px;width:8px;height:412px;background:#808080;border-radius:4px"></div>
<div class="a" style="left:72px;top:732px;width:1082px;height:16px;background:#f7f7f7"></div>
<div class="a" style="left:1083px;top:732px;width:71px;height:16px;background:#ececec"></div>
<div class="a" style="left:72px;top:732px;width:23px;height:16px;background:#ececec"></div>
<div class="t" style="left:1103px;top:734px;font-size:13px;color:#111">10 &lt; 100</div>
<svg class="a" style="left:76px;top:110px" width="36" height="20" viewBox="76 110 36 20"><path d="M79 116 L86.8 123.8 M86.8 116 L79 123.8" stroke="#4e4e4e" stroke-width="1.2"/><circle cx="102.2" cy="118.8" r="5.8" fill="#f4f4f4" stroke="#2a3f8a" stroke-width="1.7"/><path d="M99 116.5 L101 118 M100 120.5 L102.5 119" stroke="#d05050" stroke-width=".6"/><path d="M101.2 117.6 L106.8 123.6" stroke="#f0a020" stroke-width="2"/><circle cx="107" cy="124" r="1.2" fill="#e05050"/></svg>
<div class="t" style="left:591px;top:114px;font-size:12.3px;color:#1e1e1e">* birdhouse.dxf</div>
<svg class="a" style="left:72px;top:132px" width="1068" height="600" viewBox="72 132 1068 600">
<g stroke="#6a6a6a" stroke-width="1">
<line x1="97.5" y1="148" x2="97.5" y2="155"/>
<line x1="120.5" y1="148" x2="120.5" y2="155"/>
<line x1="142.5" y1="148" x2="142.5" y2="155"/>
<line x1="165.5" y1="148" x2="165.5" y2="155"/>
<line x1="188.5" y1="148" x2="188.5" y2="155"/>
<line x1="211.5" y1="148" x2="211.5" y2="155"/>
<line x1="233.5" y1="148" x2="233.5" y2="155"/>
<line x1="256.5" y1="148" x2="256.5" y2="155"/>
<line x1="279.5" y1="148" x2="279.5" y2="155"/>
<line x1="302.5" y1="148" x2="302.5" y2="155"/>
<line x1="324.5" y1="148" x2="324.5" y2="155"/>
<line x1="347.5" y1="148" x2="347.5" y2="155"/>
<line x1="370.5" y1="148" x2="370.5" y2="155"/>
<line x1="393.5" y1="148" x2="393.5" y2="155"/>
<line x1="415.5" y1="148" x2="415.5" y2="155"/>
<line x1="438.5" y1="148" x2="438.5" y2="155"/>
<line x1="461.5" y1="148" x2="461.5" y2="155"/>
<line x1="484.5" y1="148" x2="484.5" y2="155"/>
<line x1="506.5" y1="148" x2="506.5" y2="155"/>
<line x1="529.5" y1="148" x2="529.5" y2="155"/>
<line x1="552.5" y1="148" x2="552.5" y2="155"/>
<line x1="574.5" y1="148" x2="574.5" y2="155"/>
<line x1="597.5" y1="148" x2="597.5" y2="155"/>
<line x1="620.5" y1="148" x2="620.5" y2="155"/>
<line x1="643.5" y1="148" x2="643.5" y2="155"/>
<line x1="665.5" y1="148" x2="665.5" y2="155"/>
<line x1="688.5" y1="148" x2="688.5" y2="155"/>
<line x1="711.5" y1="148" x2="711.5" y2="155"/>
<line x1="734.5" y1="148" x2="734.5" y2="155"/>
<line x1="756.5" y1="148" x2="756.5" y2="155"/>
<line x1="779.5" y1="148" x2="779.5" y2="155"/>
<line x1="802.5" y1="148" x2="802.5" y2="155"/>
<line x1="825.5" y1="148" x2="825.5" y2="155"/>
<line x1="847.5" y1="148" x2="847.5" y2="155"/>
<line x1="870.5" y1="148" x2="870.5" y2="155"/>
<line x1="893.5" y1="148" x2="893.5" y2="155"/>
<line x1="915.5" y1="148" x2="915.5" y2="155"/>
<line x1="938.5" y1="148" x2="938.5" y2="155"/>
<line x1="961.5" y1="148" x2="961.5" y2="155"/>
<line x1="984.5" y1="148" x2="984.5" y2="155"/>
<line x1="1006.5" y1="148" x2="1006.5" y2="155"/>
<line x1="1029.5" y1="148" x2="1029.5" y2="155"/>
<line x1="1052.5" y1="148" x2="1052.5" y2="155"/>
<line x1="1075.5" y1="148" x2="1075.5" y2="155"/>
<line x1="1097.5" y1="148" x2="1097.5" y2="155"/>
<line x1="1120.5" y1="148" x2="1120.5" y2="155"/>
<line x1="88" y1="727.5" x2="95" y2="727.5"/>
<line x1="88" y1="705.5" x2="95" y2="705.5"/>
<line x1="88" y1="682.5" x2="95" y2="682.5"/>
<line x1="88" y1="659.5" x2="95" y2="659.5"/>
<line x1="88" y1="636.5" x2="95" y2="636.5"/>
<line x1="88" y1="614.5" x2="95" y2="614.5"/>
<line x1="88" y1="591.5" x2="95" y2="591.5"/>
<line x1="88" y1="568.5" x2="95" y2="568.5"/>
<line x1="88" y1="545.5" x2="95" y2="545.5"/>
<line x1="88" y1="523.5" x2="95" y2="523.5"/>
<line x1="88" y1="500.5" x2="95" y2="500.5"/>
<line x1="88" y1="477.5" x2="95" y2="477.5"/>
<line x1="88" y1="454.5" x2="95" y2="454.5"/>
<line x1="88" y1="432.5" x2="95" y2="432.5"/>
<line x1="88" y1="409.5" x2="95" y2="409.5"/>
<line x1="88" y1="386.5" x2="95" y2="386.5"/>
<line x1="88" y1="363.5" x2="95" y2="363.5"/>
<line x1="88" y1="341.5" x2="95" y2="341.5"/>
<line x1="88" y1="318.5" x2="95" y2="318.5"/>
<line x1="88" y1="295.5" x2="95" y2="295.5"/>
<line x1="88" y1="272.5" x2="95" y2="272.5"/>
<line x1="88" y1="250.5" x2="95" y2="250.5"/>
<line x1="88" y1="227.5" x2="95" y2="227.5"/>
<line x1="88" y1="204.5" x2="95" y2="204.5"/>
<line x1="88" y1="181.5" x2="95" y2="181.5"/>
<line x1="88" y1="159.5" x2="95" y2="159.5"/>
</g>
<g font-family="Liberation Sans" font-size="9.3" fill="#1a1a1a" text-anchor="middle">
<text transform="translate(97.5 141)">-80</text>
<text transform="translate(120.3 141)">-70</text>
<text transform="translate(143.0 141)">-60</text>
<text transform="translate(165.7 141)">-50</text>
<text transform="translate(188.5 141)">-40</text>
<text transform="translate(211.2 141)">-30</text>
<text transform="translate(233.9 141)">-20</text>
<text transform="translate(256.7 141)">-10</text>
<text transform="translate(279.4 141)">0</text>
<text transform="translate(302.1 141)">10</text>
<text transform="translate(324.9 141)">20</text>
<text transform="translate(347.6 141)">30</text>
<text transform="translate(370.3 141)">40</text>
<text transform="translate(393.1 141)">50</text>
<text transform="translate(415.8 141)">60</text>
<text transform="translate(438.5 141)">70</text>
<text transform="translate(461.3 141)">80</text>
<text transform="translate(484.0 141)">90</text>
<text transform="translate(506.8 141)">100</text>
<text transform="translate(529.5 141)">110</text>
<text transform="translate(552.2 141)">120</text>
<text transform="translate(575.0 141)">130</text>
<text transform="translate(597.7 141)">140</text>
<text transform="translate(620.4 141)">150</text>
<text transform="translate(643.2 141)">160</text>
<text transform="translate(665.9 141)">170</text>
<text transform="translate(688.6 141)">180</text>
<text transform="translate(711.4 141)">190</text>
<text transform="translate(734.1 141)">200</text>
<text transform="translate(756.8 141)">210</text>
<text transform="translate(779.6 141)">220</text>
<text transform="translate(802.3 141)">230</text>
<text transform="translate(825.0 141)">240</text>
<text transform="translate(847.8 141)">250</text>
<text transform="translate(870.5 141)">260</text>
<text transform="translate(893.2 141)">270</text>
<text transform="translate(916.0 141)">280</text>
<text transform="translate(938.7 141)">290</text>
<text transform="translate(961.4 141)">300</text>
<text transform="translate(984.2 141)">310</text>
<text transform="translate(1006.9 141)">320</text>
<text transform="translate(1029.7 141)">330</text>
<text transform="translate(1052.4 141)">340</text>
<text transform="translate(1075.1 141)">350</text>
<text transform="translate(1097.9 141)">360</text>
<text transform="translate(1120.6 141)">370</text>
<text transform="translate(1143.3 141)">380</text>
<text transform="translate(80.8 727.3) rotate(-90)" x="0" y="0">-20</text>
<text transform="translate(80.8 704.5) rotate(-90)" x="0" y="0">-10</text>
<text transform="translate(80.8 681.8) rotate(-90)" x="0" y="0">0</text>
<text transform="translate(80.8 659.1) rotate(-90)" x="0" y="0">10</text>
<text transform="translate(80.8 636.3) rotate(-90)" x="0" y="0">20</text>
<text transform="translate(80.8 613.6) rotate(-90)" x="0" y="0">30</text>
<text transform="translate(80.8 590.8) rotate(-90)" x="0" y="0">40</text>
<text transform="translate(80.8 568.1) rotate(-90)" x="0" y="0">50</text>
<text transform="translate(80.8 545.3) rotate(-90)" x="0" y="0">60</text>
<text transform="translate(80.8 522.6) rotate(-90)" x="0" y="0">70</text>
<text transform="translate(80.8 499.8) rotate(-90)" x="0" y="0">80</text>
<text transform="translate(80.8 477.1) rotate(-90)" x="0" y="0">90</text>
<text transform="translate(80.8 454.3) rotate(-90)" x="0" y="0">100</text>
<text transform="translate(80.8 431.6) rotate(-90)" x="0" y="0">110</text>
<text transform="translate(80.8 408.9) rotate(-90)" x="0" y="0">120</text>
<text transform="translate(80.8 386.1) rotate(-90)" x="0" y="0">130</text>
<text transform="translate(80.8 363.4) rotate(-90)" x="0" y="0">140</text>
<text transform="translate(80.8 340.6) rotate(-90)" x="0" y="0">150</text>
<text transform="translate(80.8 317.9) rotate(-90)" x="0" y="0">160</text>
<text transform="translate(80.8 295.1) rotate(-90)" x="0" y="0">170</text>
<text transform="translate(80.8 272.4) rotate(-90)" x="0" y="0">180</text>
<text transform="translate(80.8 249.6) rotate(-90)" x="0" y="0">190</text>
<text transform="translate(80.8 226.9) rotate(-90)" x="0" y="0">200</text>
<text transform="translate(80.8 204.2) rotate(-90)" x="0" y="0">210</text>
<text transform="translate(80.8 181.4) rotate(-90)" x="0" y="0">220</text>
<text transform="translate(80.8 158.7) rotate(-90)" x="0" y="0">230</text>
</g>
<rect x="72" y="132" width="22" height="22.5" fill="#ececec"/>
<path d="M274 145.1 L285.3 145.1 L279.6 151 Z" fill="#000"/><line x1="279.5" y1="150" x2="279.5" y2="155" stroke="#444" stroke-width="1"/>
<path d="M85 676.2 L85 687.8 L91.2 682 Z" fill="#000"/><line x1="90" y1="682" x2="95" y2="682" stroke="#444" stroke-width="1"/>
</svg>
<svg class="a" style="left:95px;top:155px" width="1045" height="577" viewBox="95 155 1045 577">
<defs><radialGradient id="ring" cx=".5" cy=".5" r=".5"><stop offset="0" stop-color="#b4c4d4" stop-opacity="0"/><stop offset=".72" stop-color="#b4c4d4" stop-opacity="0"/><stop offset=".8" stop-color="#9fb3c8" stop-opacity=".35"/><stop offset=".9" stop-color="#8fa6c0" stop-opacity=".75"/><stop offset=".97" stop-color="#9fb3c8" stop-opacity=".6"/><stop offset="1" stop-color="#b4c4d4" stop-opacity="0"/></radialGradient></defs>
<path fill="#e2e2e2" d="M97.5 727.3h1v1h-1zM97.5 704.5h1v1h-1zM97.5 681.8h1v1h-1zM97.5 659.1h1v1h-1zM97.5 636.3h1v1h-1zM97.5 613.6h1v1h-1zM97.5 590.9h1v1h-1zM97.5 568.1h1v1h-1zM97.5 545.4h1v1h-1zM97.5 522.7h1v1h-1zM97.5 499.9h1v1h-1zM97.5 477.2h1v1h-1zM97.5 454.4h1v1h-1zM97.5 431.7h1v1h-1zM97.5 409.0h1v1h-1zM97.5 386.2h1v1h-1zM97.5 363.5h1v1h-1zM97.5 340.8h1v1h-1zM97.5 318.0h1v1h-1zM97.5 295.3h1v1h-1zM97.5 272.6h1v1h-1zM97.5 249.8h1v1h-1zM97.5 227.1h1v1h-1zM97.5 204.4h1v1h-1zM97.5 181.6h1v1h-1zM97.5 158.9h1v1h-1zM120.3 727.3h1v1h-1zM120.3 704.5h1v1h-1zM120.3 681.8h1v1h-1zM120.3 659.1h1v1h-1zM120.3 636.3h1v1h-1zM120.3 613.6h1v1h-1zM120.3 590.9h1v1h-1zM120.3 568.1h1v1h-1zM120.3 545.4h1v1h-1zM120.3 522.7h1v1h-1zM120.3 499.9h1v1h-1zM120.3 477.2h1v1h-1zM120.3 454.4h1v1h-1zM120.3 431.7h1v1h-1zM120.3 409.0h1v1h-1zM120.3 386.2h1v1h-1zM120.3 363.5h1v1h-1zM120.3 340.8h1v1h-1zM120.3 318.0h1v1h-1zM120.3 295.3h1v1h-1zM120.3 272.6h1v1h-1zM120.3 249.8h1v1h-1zM120.3 227.1h1v1h-1zM120.3 204.4h1v1h-1zM120.3 181.6h1v1h-1zM120.3 158.9h1v1h-1zM143.0 727.3h1v1h-1zM143.0 704.5h1v1h-1zM143.0 681.8h1v1h-1zM143.0 659.1h1v1h-1zM143.0 636.3h1v1h-1zM143.0 613.6h1v1h-1zM143.0 590.9h1v1h-1zM143.0 568.1h1v1h-1zM143.0 545.4h1v1h-1zM143.0 522.7h1v1h-1zM143.0 499.9h1v1h-1zM143.0 477.2h1v1h-1zM143.0 454.4h1v1h-1zM143.0 431.7h1v1h-1zM143.0 409.0h1v1h-1zM143.0 386.2h1v1h-1zM143.0 363.5h1v1h-1zM143.0 340.8h1v1h-1zM143.0 318.0h1v1h-1zM143.0 295.3h1v1h-1zM143.0 272.6h1v1h-1zM143.0 249.8h1v1h-1zM143.0 227.1h1v1h-1zM143.0 204.4h1v1h-1zM143.0 181.6h1v1h-1zM143.0 158.9h1v1h-1zM165.7 727.3h1v1h-1zM165.7 704.5h1v1h-1zM165.7 681.8h1v1h-1zM165.7 659.1h1v1h-1zM165.7 636.3h1v1h-1zM165.7 613.6h1v1h-1zM165.7 590.9h1v1h-1zM165.7 568.1h1v1h-1zM165.7 545.4h1v1h-1zM165.7 522.7h1v1h-1zM165.7 499.9h1v1h-1zM165.7 477.2h1v1h-1zM165.7 454.4h1v1h-1zM165.7 431.7h1v1h-1zM165.7 409.0h1v1h-1zM165.7 386.2h1v1h-1zM165.7 363.5h1v1h-1zM165.7 340.8h1v1h-1zM165.7 318.0h1v1h-1zM165.7 295.3h1v1h-1zM165.7 272.6h1v1h-1zM165.7 249.8h1v1h-1zM165.7 227.1h1v1h-1zM165.7 204.4h1v1h-1zM165.7 181.6h1v1h-1zM165.7 158.9h1v1h-1zM188.5 727.3h1v1h-1zM188.5 704.5h1v1h-1zM188.5 681.8h1v1h-1zM188.5 659.1h1v1h-1zM188.5 636.3h1v1h-1zM188.5 613.6h1v1h-1zM188.5 590.9h1v1h-1zM188.5 568.1h1v1h-1zM188.5 545.4h1v1h-1zM188.5 522.7h1v1h-1zM188.5 499.9h1v1h-1zM188.5 477.2h1v1h-1zM188.5 454.4h1v1h-1zM188.5 431.7h1v1h-1zM188.5 409.0h1v1h-1zM188.5 386.2h1v1h-1zM188.5 363.5h1v1h-1zM188.5 340.8h1v1h-1zM188.5 318.0h1v1h-1zM188.5 295.3h1v1h-1zM188.5 272.6h1v1h-1zM188.5 249.8h1v1h-1zM188.5 227.1h1v1h-1zM188.5 204.4h1v1h-1zM188.5 181.6h1v1h-1zM188.5 158.9h1v1h-1zM211.2 727.3h1v1h-1zM211.2 704.5h1v1h-1zM211.2 681.8h1v1h-1zM211.2 659.1h1v1h-1zM211.2 636.3h1v1h-1zM211.2 613.6h1v1h-1zM211.2 590.9h1v1h-1zM211.2 568.1h1v1h-1zM211.2 545.4h1v1h-1zM211.2 522.7h1v1h-1zM211.2 499.9h1v1h-1zM211.2 477.2h1v1h-1zM211.2 454.4h1v1h-1zM211.2 431.7h1v1h-1zM211.2 409.0h1v1h-1zM211.2 386.2h1v1h-1zM211.2 363.5h1v1h-1zM211.2 340.8h1v1h-1zM211.2 318.0h1v1h-1zM211.2 295.3h1v1h-1zM211.2 272.6h1v1h-1zM211.2 249.8h1v1h-1zM211.2 227.1h1v1h-1zM211.2 204.4h1v1h-1zM211.2 181.6h1v1h-1zM211.2 158.9h1v1h-1zM233.9 727.3h1v1h-1zM233.9 704.5h1v1h-1zM233.9 681.8h1v1h-1zM233.9 659.1h1v1h-1zM233.9 636.3h1v1h-1zM233.9 613.6h1v1h-1zM233.9 590.9h1v1h-1zM233.9 568.1h1v1h-1zM233.9 545.4h1v1h-1zM233.9 522.7h1v1h-1zM233.9 499.9h1v1h-1zM233.9 477.2h1v1h-1zM233.9 454.4h1v1h-1zM233.9 431.7h1v1h-1zM233.9 409.0h1v1h-1zM233.9 386.2h1v1h-1zM233.9 363.5h1v1h-1zM233.9 340.8h1v1h-1zM233.9 318.0h1v1h-1zM233.9 295.3h1v1h-1zM233.9 272.6h1v1h-1zM233.9 249.8h1v1h-1zM233.9 227.1h1v1h-1zM233.9 204.4h1v1h-1zM233.9 181.6h1v1h-1zM233.9 158.9h1v1h-1zM256.7 727.3h1v1h-1zM256.7 704.5h1v1h-1zM256.7 681.8h1v1h-1zM256.7 659.1h1v1h-1zM256.7 636.3h1v1h-1zM256.7 613.6h1v1h-1zM256.7 590.9h1v1h-1zM256.7 568.1h1v1h-1zM256.7 545.4h1v1h-1zM256.7 522.7h1v1h-1zM256.7 499.9h1v1h-1zM256.7 477.2h1v1h-1zM256.7 454.4h1v1h-1zM256.7 431.7h1v1h-1zM256.7 409.0h1v1h-1zM256.7 386.2h1v1h-1zM256.7 363.5h1v1h-1zM256.7 340.8h1v1h-1zM256.7 318.0h1v1h-1zM256.7 295.3h1v1h-1zM256.7 272.6h1v1h-1zM256.7 249.8h1v1h-1zM256.7 227.1h1v1h-1zM256.7 204.4h1v1h-1zM256.7 181.6h1v1h-1zM256.7 158.9h1v1h-1zM279.4 727.3h1v1h-1zM279.4 704.5h1v1h-1zM279.4 681.8h1v1h-1zM279.4 659.1h1v1h-1zM279.4 636.3h1v1h-1zM279.4 613.6h1v1h-1zM279.4 590.9h1v1h-1zM279.4 568.1h1v1h-1zM279.4 545.4h1v1h-1zM279.4 522.7h1v1h-1zM279.4 499.9h1v1h-1zM279.4 477.2h1v1h-1zM279.4 454.4h1v1h-1zM279.4 431.7h1v1h-1zM279.4 409.0h1v1h-1zM279.4 386.2h1v1h-1zM279.4 363.5h1v1h-1zM279.4 340.8h1v1h-1zM279.4 318.0h1v1h-1zM279.4 295.3h1v1h-1zM279.4 272.6h1v1h-1zM279.4 249.8h1v1h-1zM279.4 227.1h1v1h-1zM279.4 204.4h1v1h-1zM279.4 181.6h1v1h-1zM279.4 158.9h1v1h-1zM302.1 727.3h1v1h-1zM302.1 704.5h1v1h-1zM302.1 681.8h1v1h-1zM302.1 659.1h1v1h-1zM302.1 636.3h1v1h-1zM302.1 613.6h1v1h-1zM302.1 590.9h1v1h-1zM302.1 568.1h1v1h-1zM302.1 545.4h1v1h-1zM302.1 522.7h1v1h-1zM302.1 499.9h1v1h-1zM302.1 477.2h1v1h-1zM302.1 454.4h1v1h-1zM302.1 431.7h1v1h-1zM302.1 409.0h1v1h-1zM302.1 386.2h1v1h-1zM302.1 363.5h1v1h-1zM302.1 340.8h1v1h-1zM302.1 318.0h1v1h-1zM302.1 295.3h1v1h-1zM302.1 272.6h1v1h-1zM302.1 249.8h1v1h-1zM302.1 227.1h1v1h-1zM302.1 204.4h1v1h-1zM302.1 181.6h1v1h-1zM302.1 158.9h1v1h-1zM324.9 727.3h1v1h-1zM324.9 704.5h1v1h-1zM324.9 681.8h1v1h-1zM324.9 659.1h1v1h-1zM324.9 636.3h1v1h-1zM324.9 613.6h1v1h-1zM324.9 590.9h1v1h-1zM324.9 568.1h1v1h-1zM324.9 545.4h1v1h-1zM324.9 522.7h1v1h-1zM324.9 499.9h1v1h-1zM324.9 477.2h1v1h-1zM324.9 454.4h1v1h-1zM324.9 431.7h1v1h-1zM324.9 409.0h1v1h-1zM324.9 386.2h1v1h-1zM324.9 363.5h1v1h-1zM324.9 340.8h1v1h-1zM324.9 318.0h1v1h-1zM324.9 295.3h1v1h-1zM324.9 272.6h1v1h-1zM324.9 249.8h1v1h-1zM324.9 227.1h1v1h-1zM324.9 204.4h1v1h-1zM324.9 181.6h1v1h-1zM324.9 158.9h1v1h-1zM347.6 727.3h1v1h-1zM347.6 704.5h1v1h-1zM347.6 681.8h1v1h-1zM347.6 659.1h1v1h-1zM347.6 636.3h1v1h-1zM347.6 613.6h1v1h-1zM347.6 590.9h1v1h-1zM347.6 568.1h1v1h-1zM347.6 545.4h1v1h-1zM347.6 522.7h1v1h-1zM347.6 499.9h1v1h-1zM347.6 477.2h1v1h-1zM347.6 454.4h1v1h-1zM347.6 431.7h1v1h-1zM347.6 409.0h1v1h-1zM347.6 386.2h1v1h-1zM347.6 363.5h1v1h-1zM347.6 340.8h1v1h-1zM347.6 318.0h1v1h-1zM347.6 295.3h1v1h-1zM347.6 272.6h1v1h-1zM347.6 249.8h1v1h-1zM347.6 227.1h1v1h-1zM347.6 204.4h1v1h-1zM347.6 181.6h1v1h-1zM347.6 158.9h1v1h-1zM370.3 727.3h1v1h-1zM370.3 704.5h1v1h-1zM370.3 681.8h1v1h-1zM370.3 659.1h1v1h-1zM370.3 636.3h1v1h-1zM370.3 613.6h1v1h-1zM370.3 590.9h1v1h-1zM370.3 568.1h1v1h-1zM370.3 545.4h1v1h-1zM370.3 522.7h1v1h-1zM370.3 499.9h1v1h-1zM370.3 477.2h1v1h-1zM370.3 454.4h1v1h-1zM370.3 431.7h1v1h-1zM370.3 409.0h1v1h-1zM370.3 386.2h1v1h-1zM370.3 363.5h1v1h-1zM370.3 340.8h1v1h-1zM370.3 318.0h1v1h-1zM370.3 295.3h1v1h-1zM370.3 272.6h1v1h-1zM370.3 249.8h1v1h-1zM370.3 227.1h1v1h-1zM370.3 204.4h1v1h-1zM370.3 181.6h1v1h-1zM370.3 158.9h1v1h-1zM393.1 727.3h1v1h-1zM393.1 704.5h1v1h-1zM393.1 681.8h1v1h-1zM393.1 659.1h1v1h-1zM393.1 636.3h1v1h-1zM393.1 613.6h1v1h-1zM393.1 590.9h1v1h-1zM393.1 568.1h1v1h-1zM393.1 545.4h1v1h-1zM393.1 522.7h1v1h-1zM393.1 499.9h1v1h-1zM393.1 477.2h1v1h-1zM393.1 454.4h1v1h-1zM393.1 431.7h1v1h-1zM393.1 409.0h1v1h-1zM393.1 386.2h1v1h-1zM393.1 363.5h1v1h-1zM393.1 340.8h1v1h-1zM393.1 318.0h1v1h-1zM393.1 295.3h1v1h-1zM393.1 272.6h1v1h-1zM393.1 249.8h1v1h-1zM393.1 227.1h1v1h-1zM393.1 204.4h1v1h-1zM393.1 181.6h1v1h-1zM393.1 158.9h1v1h-1zM415.8 727.3h1v1h-1zM415.8 704.5h1v1h-1zM415.8 681.8h1v1h-1zM415.8 659.1h1v1h-1zM415.8 636.3h1v1h-1zM415.8 613.6h1v1h-1zM415.8 590.9h1v1h-1zM415.8 568.1h1v1h-1zM415.8 545.4h1v1h-1zM415.8 522.7h1v1h-1zM415.8 499.9h1v1h-1zM415.8 477.2h1v1h-1zM415.8 454.4h1v1h-1zM415.8 431.7h1v1h-1zM415.8 409.0h1v1h-1zM415.8 386.2h1v1h-1zM415.8 363.5h1v1h-1zM415.8 340.8h1v1h-1zM415.8 318.0h1v1h-1zM415.8 295.3h1v1h-1zM415.8 272.6h1v1h-1zM415.8 249.8h1v1h-1zM415.8 227.1h1v1h-1zM415.8 204.4h1v1h-1zM415.8 181.6h1v1h-1zM415.8 158.9h1v1h-1zM438.5 727.3h1v1h-1zM438.5 704.5h1v1h-1zM438.5 681.8h1v1h-1zM438.5 659.1h1v1h-1zM438.5 636.3h1v1h-1zM438.5 613.6h1v1h-1zM438.5 590.9h1v1h-1zM438.5 568.1h1v1h-1zM438.5 545.4h1v1h-1zM438.5 522.7h1v1h-1zM438.5 499.9h1v1h-1zM438.5 477.2h1v1h-1zM438.5 454.4h1v1h-1zM438.5 431.7h1v1h-1zM438.5 409.0h1v1h-1zM438.5 386.2h1v1h-1zM438.5 363.5h1v1h-1zM438.5 340.8h1v1h-1zM438.5 318.0h1v1h-1zM438.5 295.3h1v1h-1zM438.5 272.6h1v1h-1zM438.5 249.8h1v1h-1zM438.5 227.1h1v1h-1zM438.5 204.4h1v1h-1zM438.5 181.6h1v1h-1zM438.5 158.9h1v1h-1zM461.3 727.3h1v1h-1zM461.3 704.5h1v1h-1zM461.3 681.8h1v1h-1zM461.3 659.1h1v1h-1zM461.3 636.3h1v1h-1zM461.3 613.6h1v1h-1zM461.3 590.9h1v1h-1zM461.3 568.1h1v1h-1zM461.3 545.4h1v1h-1zM461.3 522.7h1v1h-1zM461.3 499.9h1v1h-1zM461.3 477.2h1v1h-1zM461.3 454.4h1v1h-1zM461.3 431.7h1v1h-1zM461.3 409.0h1v1h-1zM461.3 386.2h1v1h-1zM461.3 363.5h1v1h-1zM461.3 340.8h1v1h-1zM461.3 318.0h1v1h-1zM461.3 295.3h1v1h-1zM461.3 272.6h1v1h-1zM461.3 249.8h1v1h-1zM461.3 227.1h1v1h-1zM461.3 204.4h1v1h-1zM461.3 181.6h1v1h-1zM461.3 158.9h1v1h-1zM484.0 727.3h1v1h-1zM484.0 704.5h1v1h-1zM484.0 681.8h1v1h-1zM484.0 659.1h1v1h-1zM484.0 636.3h1v1h-1zM484.0 613.6h1v1h-1zM484.0 590.9h1v1h-1zM484.0 568.1h1v1h-1zM484.0 545.4h1v1h-1zM484.0 522.7h1v1h-1zM484.0 499.9h1v1h-1zM484.0 477.2h1v1h-1zM484.0 454.4h1v1h-1zM484.0 431.7h1v1h-1zM484.0 409.0h1v1h-1zM484.0 386.2h1v1h-1zM484.0 363.5h1v1h-1zM484.0 340.8h1v1h-1zM484.0 318.0h1v1h-1zM484.0 295.3h1v1h-1zM484.0 272.6h1v1h-1zM484.0 249.8h1v1h-1zM484.0 227.1h1v1h-1zM484.0 204.4h1v1h-1zM484.0 181.6h1v1h-1zM484.0 158.9h1v1h-1zM506.8 727.3h1v1h-1zM506.8 704.5h1v1h-1zM506.8 681.8h1v1h-1zM506.8 659.1h1v1h-1zM506.8 636.3h1v1h-1zM506.8 613.6h1v1h-1zM506.8 590.9h1v1h-1zM506.8 568.1h1v1h-1zM506.8 545.4h1v1h-1zM506.8 522.7h1v1h-1zM506.8 499.9h1v1h-1zM506.8 477.2h1v1h-1zM506.8 454.4h1v1h-1zM506.8 431.7h1v1h-1zM506.8 409.0h1v1h-1zM506.8 386.2h1v1h-1zM506.8 363.5h1v1h-1zM506.8 340.8h1v1h-1zM506.8 318.0h1v1h-1zM506.8 295.3h1v1h-1zM506.8 272.6h1v1h-1zM506.8 249.8h1v1h-1zM506.8 227.1h1v1h-1zM506.8 204.4h1v1h-1zM506.8 181.6h1v1h-1zM506.8 158.9h1v1h-1zM529.5 727.3h1v1h-1zM529.5 704.5h1v1h-1zM529.5 681.8h1v1h-1zM529.5 659.1h1v1h-1zM529.5 636.3h1v1h-1zM529.5 613.6h1v1h-1zM529.5 590.9h1v1h-1zM529.5 568.1h1v1h-1zM529.5 545.4h1v1h-1zM529.5 522.7h1v1h-1zM529.5 499.9h1v1h-1zM529.5 477.2h1v1h-1zM529.5 454.4h1v1h-1zM529.5 431.7h1v1h-1zM529.5 409.0h1v1h-1zM529.5 386.2h1v1h-1zM529.5 363.5h1v1h-1zM529.5 340.8h1v1h-1zM529.5 318.0h1v1h-1zM529.5 295.3h1v1h-1zM529.5 272.6h1v1h-1zM529.5 249.8h1v1h-1zM529.5 227.1h1v1h-1zM529.5 204.4h1v1h-1zM529.5 181.6h1v1h-1zM529.5 158.9h1v1h-1zM552.2 727.3h1v1h-1zM552.2 704.5h1v1h-1zM552.2 681.8h1v1h-1zM552.2 659.1h1v1h-1zM552.2 636.3h1v1h-1zM552.2 613.6h1v1h-1zM552.2 590.9h1v1h-1zM552.2 568.1h1v1h-1zM552.2 545.4h1v1h-1zM552.2 522.7h1v1h-1zM552.2 499.9h1v1h-1zM552.2 477.2h1v1h-1zM552.2 454.4h1v1h-1zM552.2 431.7h1v1h-1zM552.2 409.0h1v1h-1zM552.2 386.2h1v1h-1zM552.2 363.5h1v1h-1zM552.2 340.8h1v1h-1zM552.2 318.0h1v1h-1zM552.2 295.3h1v1h-1zM552.2 272.6h1v1h-1zM552.2 249.8h1v1h-1zM552.2 227.1h1v1h-1zM552.2 204.4h1v1h-1zM552.2 181.6h1v1h-1zM552.2 158.9h1v1h-1zM575.0 727.3h1v1h-1zM575.0 704.5h1v1h-1zM575.0 681.8h1v1h-1zM575.0 659.1h1v1h-1zM575.0 636.3h1v1h-1zM575.0 613.6h1v1h-1zM575.0 590.9h1v1h-1zM575.0 568.1h1v1h-1zM575.0 545.4h1v1h-1zM575.0 522.7h1v1h-1zM575.0 499.9h1v1h-1zM575.0 477.2h1v1h-1zM575.0 454.4h1v1h-1zM575.0 431.7h1v1h-1zM575.0 409.0h1v1h-1zM575.0 386.2h1v1h-1zM575.0 363.5h1v1h-1zM575.0 340.8h1v1h-1zM575.0 318.0h1v1h-1zM575.0 295.3h1v1h-1zM575.0 272.6h1v1h-1zM575.0 249.8h1v1h-1zM575.0 227.1h1v1h-1zM575.0 204.4h1v1h-1zM575.0 181.6h1v1h-1zM575.0 158.9h1v1h-1zM597.7 727.3h1v1h-1zM597.7 704.5h1v1h-1zM597.7 681.8h1v1h-1zM597.7 659.1h1v1h-1zM597.7 636.3h1v1h-1zM597.7 613.6h1v1h-1zM597.7 590.9h1v1h-1zM597.7 568.1h1v1h-1zM597.7 545.4h1v1h-1zM597.7 522.7h1v1h-1zM597.7 499.9h1v1h-1zM597.7 477.2h1v1h-1zM597.7 454.4h1v1h-1zM597.7 431.7h1v1h-1zM597.7 409.0h1v1h-1zM597.7 386.2h1v1h-1zM597.7 363.5h1v1h-1zM597.7 340.8h1v1h-1zM597.7 318.0h1v1h-1zM597.7 295.3h1v1h-1zM597.7 272.6h1v1h-1zM597.7 249.8h1v1h-1zM597.7 227.1h1v1h-1zM597.7 204.4h1v1h-1zM597.7 181.6h1v1h-1zM597.7 158.9h1v1h-1zM620.4 727.3h1v1h-1zM620.4 704.5h1v1h-1zM620.4 681.8h1v1h-1zM620.4 659.1h1v1h-1zM620.4 636.3h1v1h-1zM620.4 613.6h1v1h-1zM620.4 590.9h1v1h-1zM620.4 568.1h1v1h-1zM620.4 545.4h1v1h-1zM620.4 522.7h1v1h-1zM620.4 499.9h1v1h-1zM620.4 477.2h1v1h-1zM620.4 454.4h1v1h-1zM620.4 431.7h1v1h-1zM620.4 409.0h1v1h-1zM620.4 386.2h1v1h-1zM620.4 363.5h1v1h-1zM620.4 340.8h1v1h-1zM620.4 318.0h1v1h-1zM620.4 295.3h1v1h-1zM620.4 272.6h1v1h-1zM620.4 249.8h1v1h-1zM620.4 227.1h1v1h-1zM620.4 204.4h1v1h-1zM620.4 181.6h1v1h-1zM620.4 158.9h1v1h-1zM643.2 727.3h1v1h-1zM643.2 704.5h1v1h-1zM643.2 681.8h1v1h-1zM643.2 659.1h1v1h-1zM643.2 636.3h1v1h-1zM643.2 613.6h1v1h-1zM643.2 590.9h1v1h-1zM643.2 568.1h1v1h-1zM643.2 545.4h1v1h-1zM643.2 522.7h1v1h-1zM643.2 499.9h1v1h-1zM643.2 477.2h1v1h-1zM643.2 454.4h1v1h-1zM643.2 431.7h1v1h-1zM643.2 409.0h1v1h-1zM643.2 386.2h1v1h-1zM643.2 363.5h1v1h-1zM643.2 340.8h1v1h-1zM643.2 318.0h1v1h-1zM643.2 295.3h1v1h-1zM643.2 272.6h1v1h-1zM643.2 249.8h1v1h-1zM643.2 227.1h1v1h-1zM643.2 204.4h1v1h-1zM643.2 181.6h1v1h-1zM643.2 158.9h1v1h-1zM665.9 727.3h1v1h-1zM665.9 704.5h1v1h-1zM665.9 681.8h1v1h-1zM665.9 659.1h1v1h-1zM665.9 636.3h1v1h-1zM665.9 613.6h1v1h-1zM665.9 590.9h1v1h-1zM665.9 568.1h1v1h-1zM665.9 545.4h1v1h-1zM665.9 522.7h1v1h-1zM665.9 499.9h1v1h-1zM665.9 477.2h1v1h-1zM665.9 454.4h1v1h-1zM665.9 431.7h1v1h-1zM665.9 409.0h1v1h-1zM665.9 386.2h1v1h-1zM665.9 363.5h1v1h-1zM665.9 340.8h1v1h-1zM665.9 318.0h1v1h-1zM665.9 295.3h1v1h-1zM665.9 272.6h1v1h-1zM665.9 249.8h1v1h-1zM665.9 227.1h1v1h-1zM665.9 204.4h1v1h-1zM665.9 181.6h1v1h-1zM665.9 158.9h1v1h-1zM688.6 727.3h1v1h-1zM688.6 704.5h1v1h-1zM688.6 681.8h1v1h-1zM688.6 659.1h1v1h-1zM688.6 636.3h1v1h-1zM688.6 613.6h1v1h-1zM688.6 590.9h1v1h-1zM688.6 568.1h1v1h-1zM688.6 545.4h1v1h-1zM688.6 522.7h1v1h-1zM688.6 499.9h1v1h-1zM688.6 477.2h1v1h-1zM688.6 454.4h1v1h-1zM688.6 431.7h1v1h-1zM688.6 409.0h1v1h-1zM688.6 386.2h1v1h-1zM688.6 363.5h1v1h-1zM688.6 340.8h1v1h-1zM688.6 318.0h1v1h-1zM688.6 295.3h1v1h-1zM688.6 272.6h1v1h-1zM688.6 249.8h1v1h-1zM688.6 227.1h1v1h-1zM688.6 204.4h1v1h-1zM688.6 181.6h1v1h-1zM688.6 158.9h1v1h-1zM711.4 727.3h1v1h-1zM711.4 704.5h1v1h-1zM711.4 681.8h1v1h-1zM711.4 659.1h1v1h-1zM711.4 636.3h1v1h-1zM711.4 613.6h1v1h-1zM711.4 590.9h1v1h-1zM711.4 568.1h1v1h-1zM711.4 545.4h1v1h-1zM711.4 522.7h1v1h-1zM711.4 499.9h1v1h-1zM711.4 477.2h1v1h-1zM711.4 454.4h1v1h-1zM711.4 431.7h1v1h-1zM711.4 409.0h1v1h-1zM711.4 386.2h1v1h-1zM711.4 363.5h1v1h-1zM711.4 340.8h1v1h-1zM711.4 318.0h1v1h-1zM711.4 295.3h1v1h-1zM711.4 272.6h1v1h-1zM711.4 249.8h1v1h-1zM711.4 227.1h1v1h-1zM711.4 204.4h1v1h-1zM711.4 181.6h1v1h-1zM711.4 158.9h1v1h-1zM734.1 727.3h1v1h-1zM734.1 704.5h1v1h-1zM734.1 681.8h1v1h-1zM734.1 659.1h1v1h-1zM734.1 636.3h1v1h-1zM734.1 613.6h1v1h-1zM734.1 590.9h1v1h-1zM734.1 568.1h1v1h-1zM734.1 545.4h1v1h-1zM734.1 522.7h1v1h-1zM734.1 499.9h1v1h-1zM734.1 477.2h1v1h-1zM734.1 454.4h1v1h-1zM734.1 431.7h1v1h-1zM734.1 409.0h1v1h-1zM734.1 386.2h1v1h-1zM734.1 363.5h1v1h-1zM734.1 340.8h1v1h-1zM734.1 318.0h1v1h-1zM734.1 295.3h1v1h-1zM734.1 272.6h1v1h-1zM734.1 249.8h1v1h-1zM734.1 227.1h1v1h-1zM734.1 204.4h1v1h-1zM734.1 181.6h1v1h-1zM734.1 158.9h1v1h-1zM756.8 727.3h1v1h-1zM756.8 704.5h1v1h-1zM756.8 681.8h1v1h-1zM756.8 659.1h1v1h-1zM756.8 636.3h1v1h-1zM756.8 613.6h1v1h-1zM756.8 590.9h1v1h-1zM756.8 568.1h1v1h-1zM756.8 545.4h1v1h-1zM756.8 522.7h1v1h-1zM756.8 499.9h1v1h-1zM756.8 477.2h1v1h-1zM756.8 454.4h1v1h-1zM756.8 431.7h1v1h-1zM756.8 409.0h1v1h-1zM756.8 386.2h1v1h-1zM756.8 363.5h1v1h-1zM756.8 340.8h1v1h-1zM756.8 318.0h1v1h-1zM756.8 295.3h1v1h-1zM756.8 272.6h1v1h-1zM756.8 249.8h1v1h-1zM756.8 227.1h1v1h-1zM756.8 204.4h1v1h-1zM756.8 181.6h1v1h-1zM756.8 158.9h1v1h-1zM779.6 727.3h1v1h-1zM779.6 704.5h1v1h-1zM779.6 681.8h1v1h-1zM779.6 659.1h1v1h-1zM779.6 636.3h1v1h-1zM779.6 613.6h1v1h-1zM779.6 590.9h1v1h-1zM779.6 568.1h1v1h-1zM779.6 545.4h1v1h-1zM779.6 522.7h1v1h-1zM779.6 499.9h1v1h-1zM779.6 477.2h1v1h-1zM779.6 454.4h1v1h-1zM779.6 431.7h1v1h-1zM779.6 409.0h1v1h-1zM779.6 386.2h1v1h-1zM779.6 363.5h1v1h-1zM779.6 340.8h1v1h-1zM779.6 318.0h1v1h-1zM779.6 295.3h1v1h-1zM779.6 272.6h1v1h-1zM779.6 249.8h1v1h-1zM779.6 227.1h1v1h-1zM779.6 204.4h1v1h-1zM779.6 181.6h1v1h-1zM779.6 158.9h1v1h-1zM802.3 727.3h1v1h-1zM802.3 704.5h1v1h-1zM802.3 681.8h1v1h-1zM802.3 659.1h1v1h-1zM802.3 636.3h1v1h-1zM802.3 613.6h1v1h-1zM802.3 590.9h1v1h-1zM802.3 568.1h1v1h-1zM802.3 545.4h1v1h-1zM802.3 522.7h1v1h-1zM802.3 499.9h1v1h-1zM802.3 477.2h1v1h-1zM802.3 454.4h1v1h-1zM802.3 431.7h1v1h-1zM802.3 409.0h1v1h-1zM802.3 386.2h1v1h-1zM802.3 363.5h1v1h-1zM802.3 340.8h1v1h-1zM802.3 318.0h1v1h-1zM802.3 295.3h1v1h-1zM802.3 272.6h1v1h-1zM802.3 249.8h1v1h-1zM802.3 227.1h1v1h-1zM802.3 204.4h1v1h-1zM802.3 181.6h1v1h-1zM802.3 158.9h1v1h-1zM825.0 727.3h1v1h-1zM825.0 704.5h1v1h-1zM825.0 681.8h1v1h-1zM825.0 659.1h1v1h-1zM825.0 636.3h1v1h-1zM825.0 613.6h1v1h-1zM825.0 590.9h1v1h-1zM825.0 568.1h1v1h-1zM825.0 545.4h1v1h-1zM825.0 522.7h1v1h-1zM825.0 499.9h1v1h-1zM825.0 477.2h1v1h-1zM825.0 454.4h1v1h-1zM825.0 431.7h1v1h-1zM825.0 409.0h1v1h-1zM825.0 386.2h1v1h-1zM825.0 363.5h1v1h-1zM825.0 340.8h1v1h-1zM825.0 318.0h1v1h-1zM825.0 295.3h1v1h-1zM825.0 272.6h1v1h-1zM825.0 249.8h1v1h-1zM825.0 227.1h1v1h-1zM825.0 204.4h1v1h-1zM825.0 181.6h1v1h-1zM825.0 158.9h1v1h-1zM847.8 727.3h1v1h-1zM847.8 704.5h1v1h-1zM847.8 681.8h1v1h-1zM847.8 659.1h1v1h-1zM847.8 636.3h1v1h-1zM847.8 613.6h1v1h-1zM847.8 590.9h1v1h-1zM847.8 568.1h1v1h-1zM847.8 545.4h1v1h-1zM847.8 522.7h1v1h-1zM847.8 499.9h1v1h-1zM847.8 477.2h1v1h-1zM847.8 454.4h1v1h-1zM847.8 431.7h1v1h-1zM847.8 409.0h1v1h-1zM847.8 386.2h1v1h-1zM847.8 363.5h1v1h-1zM847.8 340.8h1v1h-1zM847.8 318.0h1v1h-1zM847.8 295.3h1v1h-1zM847.8 272.6h1v1h-1zM847.8 249.8h1v1h-1zM847.8 227.1h1v1h-1zM847.8 204.4h1v1h-1zM847.8 181.6h1v1h-1zM847.8 158.9h1v1h-1zM870.5 727.3h1v1h-1zM870.5 704.5h1v1h-1zM870.5 681.8h1v1h-1zM870.5 659.1h1v1h-1zM870.5 636.3h1v1h-1zM870.5 613.6h1v1h-1zM870.5 590.9h1v1h-1zM870.5 568.1h1v1h-1zM870.5 545.4h1v1h-1zM870.5 522.7h1v1h-1zM870.5 499.9h1v1h-1zM870.5 477.2h1v1h-1zM870.5 454.4h1v1h-1zM870.5 431.7h1v1h-1zM870.5 409.0h1v1h-1zM870.5 386.2h1v1h-1zM870.5 363.5h1v1h-1zM870.5 340.8h1v1h-1zM870.5 318.0h1v1h-1zM870.5 295.3h1v1h-1zM870.5 272.6h1v1h-1zM870.5 249.8h1v1h-1zM870.5 227.1h1v1h-1zM870.5 204.4h1v1h-1zM870.5 181.6h1v1h-1zM870.5 158.9h1v1h-1zM893.2 727.3h1v1h-1zM893.2 704.5h1v1h-1zM893.2 681.8h1v1h-1zM893.2 659.1h1v1h-1zM893.2 636.3h1v1h-1zM893.2 613.6h1v1h-1zM893.2 590.9h1v1h-1zM893.2 568.1h1v1h-1zM893.2 545.4h1v1h-1zM893.2 522.7h1v1h-1zM893.2 499.9h1v1h-1zM893.2 477.2h1v1h-1zM893.2 454.4h1v1h-1zM893.2 431.7h1v1h-1zM893.2 409.0h1v1h-1zM893.2 386.2h1v1h-1zM893.2 363.5h1v1h-1zM893.2 340.8h1v1h-1zM893.2 318.0h1v1h-1zM893.2 295.3h1v1h-1zM893.2 272.6h1v1h-1zM893.2 249.8h1v1h-1zM893.2 227.1h1v1h-1zM893.2 204.4h1v1h-1zM893.2 181.6h1v1h-1zM893.2 158.9h1v1h-1zM916.0 727.3h1v1h-1zM916.0 704.5h1v1h-1zM916.0 681.8h1v1h-1zM916.0 659.1h1v1h-1zM916.0 636.3h1v1h-1zM916.0 613.6h1v1h-1zM916.0 590.9h1v1h-1zM916.0 568.1h1v1h-1zM916.0 545.4h1v1h-1zM916.0 522.7h1v1h-1zM916.0 499.9h1v1h-1zM916.0 477.2h1v1h-1zM916.0 454.4h1v1h-1zM916.0 431.7h1v1h-1zM916.0 409.0h1v1h-1zM916.0 386.2h1v1h-1zM916.0 363.5h1v1h-1zM916.0 340.8h1v1h-1zM916.0 318.0h1v1h-1zM916.0 295.3h1v1h-1zM916.0 272.6h1v1h-1zM916.0 249.8h1v1h-1zM916.0 227.1h1v1h-1zM916.0 204.4h1v1h-1zM916.0 181.6h1v1h-1zM916.0 158.9h1v1h-1zM938.7 727.3h1v1h-1zM938.7 704.5h1v1h-1zM938.7 681.8h1v1h-1zM938.7 659.1h1v1h-1zM938.7 636.3h1v1h-1zM938.7 613.6h1v1h-1zM938.7 590.9h1v1h-1zM938.7 568.1h1v1h-1zM938.7 545.4h1v1h-1zM938.7 522.7h1v1h-1zM938.7 499.9h1v1h-1zM938.7 477.2h1v1h-1zM938.7 454.4h1v1h-1zM938.7 431.7h1v1h-1zM938.7 409.0h1v1h-1zM938.7 386.2h1v1h-1zM938.7 363.5h1v1h-1zM938.7 340.8h1v1h-1zM938.7 318.0h1v1h-1zM938.7 295.3h1v1h-1zM938.7 272.6h1v1h-1zM938.7 249.8h1v1h-1zM938.7 227.1h1v1h-1zM938.7 204.4h1v1h-1zM938.7 181.6h1v1h-1zM938.7 158.9h1v1h-1zM961.4 727.3h1v1h-1zM961.4 704.5h1v1h-1zM961.4 681.8h1v1h-1zM961.4 659.1h1v1h-1zM961.4 636.3h1v1h-1zM961.4 613.6h1v1h-1zM961.4 590.9h1v1h-1zM961.4 568.1h1v1h-1zM961.4 545.4h1v1h-1zM961.4 522.7h1v1h-1zM961.4 499.9h1v1h-1zM961.4 477.2h1v1h-1zM961.4 454.4h1v1h-1zM961.4 431.7h1v1h-1zM961.4 409.0h1v1h-1zM961.4 386.2h1v1h-1zM961.4 363.5h1v1h-1zM961.4 340.8h1v1h-1zM961.4 318.0h1v1h-1zM961.4 295.3h1v1h-1zM961.4 272.6h1v1h-1zM961.4 249.8h1v1h-1zM961.4 227.1h1v1h-1zM961.4 204.4h1v1h-1zM961.4 181.6h1v1h-1zM961.4 158.9h1v1h-1zM984.2 727.3h1v1h-1zM984.2 704.5h1v1h-1zM984.2 681.8h1v1h-1zM984.2 659.1h1v1h-1zM984.2 636.3h1v1h-1zM984.2 613.6h1v1h-1zM984.2 590.9h1v1h-1zM984.2 568.1h1v1h-1zM984.2 545.4h1v1h-1zM984.2 522.7h1v1h-1zM984.2 499.9h1v1h-1zM984.2 477.2h1v1h-1zM984.2 454.4h1v1h-1zM984.2 431.7h1v1h-1zM984.2 409.0h1v1h-1zM984.2 386.2h1v1h-1zM984.2 363.5h1v1h-1zM984.2 340.8h1v1h-1zM984.2 318.0h1v1h-1zM984.2 295.3h1v1h-1zM984.2 272.6h1v1h-1zM984.2 249.8h1v1h-1zM984.2 227.1h1v1h-1zM984.2 204.4h1v1h-1zM984.2 181.6h1v1h-1zM984.2 158.9h1v1h-1zM1006.9 727.3h1v1h-1zM1006.9 704.5h1v1h-1zM1006.9 681.8h1v1h-1zM1006.9 659.1h1v1h-1zM1006.9 636.3h1v1h-1zM1006.9 613.6h1v1h-1zM1006.9 590.9h1v1h-1zM1006.9 568.1h1v1h-1zM1006.9 545.4h1v1h-1zM1006.9 522.7h1v1h-1zM1006.9 499.9h1v1h-1zM1006.9 477.2h1v1h-1zM1006.9 454.4h1v1h-1zM1006.9 431.7h1v1h-1zM1006.9 409.0h1v1h-1zM1006.9 386.2h1v1h-1zM1006.9 363.5h1v1h-1zM1006.9 340.8h1v1h-1zM1006.9 318.0h1v1h-1zM1006.9 295.3h1v1h-1zM1006.9 272.6h1v1h-1zM1006.9 249.8h1v1h-1zM1006.9 227.1h1v1h-1zM1006.9 204.4h1v1h-1zM1006.9 181.6h1v1h-1zM1006.9 158.9h1v1h-1zM1029.7 727.3h1v1h-1zM1029.7 704.5h1v1h-1zM1029.7 681.8h1v1h-1zM1029.7 659.1h1v1h-1zM1029.7 636.3h1v1h-1zM1029.7 613.6h1v1h-1zM1029.7 590.9h1v1h-1zM1029.7 568.1h1v1h-1zM1029.7 545.4h1v1h-1zM1029.7 522.7h1v1h-1zM1029.7 499.9h1v1h-1zM1029.7 477.2h1v1h-1zM1029.7 454.4h1v1h-1zM1029.7 431.7h1v1h-1zM1029.7 409.0h1v1h-1zM1029.7 386.2h1v1h-1zM1029.7 363.5h1v1h-1zM1029.7 340.8h1v1h-1zM1029.7 318.0h1v1h-1zM1029.7 295.3h1v1h-1zM1029.7 272.6h1v1h-1zM1029.7 249.8h1v1h-1zM1029.7 227.1h1v1h-1zM1029.7 204.4h1v1h-1zM1029.7 181.6h1v1h-1zM1029.7 158.9h1v1h-1zM1052.4 727.3h1v1h-1zM1052.4 704.5h1v1h-1zM1052.4 681.8h1v1h-1zM1052.4 659.1h1v1h-1zM1052.4 636.3h1v1h-1zM1052.4 613.6h1v1h-1zM1052.4 590.9h1v1h-1zM1052.4 568.1h1v1h-1zM1052.4 545.4h1v1h-1zM1052.4 522.7h1v1h-1zM1052.4 499.9h1v1h-1zM1052.4 477.2h1v1h-1zM1052.4 454.4h1v1h-1zM1052.4 431.7h1v1h-1zM1052.4 409.0h1v1h-1zM1052.4 386.2h1v1h-1zM1052.4 363.5h1v1h-1zM1052.4 340.8h1v1h-1zM1052.4 318.0h1v1h-1zM1052.4 295.3h1v1h-1zM1052.4 272.6h1v1h-1zM1052.4 249.8h1v1h-1zM1052.4 227.1h1v1h-1zM1052.4 204.4h1v1h-1zM1052.4 181.6h1v1h-1zM1052.4 158.9h1v1h-1zM1075.1 727.3h1v1h-1zM1075.1 704.5h1v1h-1zM1075.1 681.8h1v1h-1zM1075.1 659.1h1v1h-1zM1075.1 636.3h1v1h-1zM1075.1 613.6h1v1h-1zM1075.1 590.9h1v1h-1zM1075.1 568.1h1v1h-1zM1075.1 545.4h1v1h-1zM1075.1 522.7h1v1h-1zM1075.1 499.9h1v1h-1zM1075.1 477.2h1v1h-1zM1075.1 454.4h1v1h-1zM1075.1 431.7h1v1h-1zM1075.1 409.0h1v1h-1zM1075.1 386.2h1v1h-1zM1075.1 363.5h1v1h-1zM1075.1 340.8h1v1h-1zM1075.1 318.0h1v1h-1zM1075.1 295.3h1v1h-1zM1075.1 272.6h1v1h-1zM1075.1 249.8h1v1h-1zM1075.1 227.1h1v1h-1zM1075.1 204.4h1v1h-1zM1075.1 181.6h1v1h-1zM1075.1 158.9h1v1h-1zM1097.9 727.3h1v1h-1zM1097.9 704.5h1v1h-1zM1097.9 681.8h1v1h-1zM1097.9 659.1h1v1h-1zM1097.9 636.3h1v1h-1zM1097.9 613.6h1v1h-1zM1097.9 590.9h1v1h-1zM1097.9 568.1h1v1h-1zM1097.9 545.4h1v1h-1zM1097.9 522.7h1v1h-1zM1097.9 499.9h1v1h-1zM1097.9 477.2h1v1h-1zM1097.9 454.4h1v1h-1zM1097.9 431.7h1v1h-1zM1097.9 409.0h1v1h-1zM1097.9 386.2h1v1h-1zM1097.9 363.5h1v1h-1zM1097.9 340.8h1v1h-1zM1097.9 318.0h1v1h-1zM1097.9 295.3h1v1h-1zM1097.9 272.6h1v1h-1zM1097.9 249.8h1v1h-1zM1097.9 227.1h1v1h-1zM1097.9 204.4h1v1h-1zM1097.9 181.6h1v1h-1zM1097.9 158.9h1v1h-1zM1120.6 727.3h1v1h-1zM1120.6 704.5h1v1h-1zM1120.6 681.8h1v1h-1zM1120.6 659.1h1v1h-1zM1120.6 636.3h1v1h-1zM1120.6 613.6h1v1h-1zM1120.6 590.9h1v1h-1zM1120.6 568.1h1v1h-1zM1120.6 545.4h1v1h-1zM1120.6 522.7h1v1h-1zM1120.6 499.9h1v1h-1zM1120.6 477.2h1v1h-1zM1120.6 454.4h1v1h-1zM1120.6 431.7h1v1h-1zM1120.6 409.0h1v1h-1zM1120.6 386.2h1v1h-1zM1120.6 363.5h1v1h-1zM1120.6 340.8h1v1h-1zM1120.6 318.0h1v1h-1zM1120.6 295.3h1v1h-1zM1120.6 272.6h1v1h-1zM1120.6 249.8h1v1h-1zM1120.6 227.1h1v1h-1zM1120.6 204.4h1v1h-1zM1120.6 181.6h1v1h-1zM1120.6 158.9h1v1h-1z"/>
<rect x="955.5" y="214" width="8.3" height="477" fill="#808080"/>
<rect x="289" y="682.7" width="674.8" height="8.3" fill="#808080"/>
<rect x="953.3" y="214" width="2.2" height="468" fill="#c4c4c4"/>
<rect x="280.4" y="205.7" width="672.9" height="476.3" fill="#fff"/>
<rect x="280.4" y="204.5" width="672.9" height="1.2" fill="#c2c2c2"/>
<g stroke="#efefef" stroke-width="1"><line x1="506.5" y1="206" x2="506.5" y2="682"/><line x1="733.5" y1="206" x2="733.5" y2="682"/><line x1="281" y1="454.5" x2="953" y2="454.5"/><line x1="281" y1="227.5" x2="953" y2="227.5"/></g>
<g stroke="#d7d7d7" stroke-width="1"><line x1="506.5" y1="155" x2="506.5" y2="204"/><line x1="733.5" y1="155" x2="733.5" y2="204"/><line x1="95" y1="454.5" x2="279" y2="454.5"/><line x1="95" y1="227.5" x2="279" y2="227.5"/><line x1="964" y1="454.5" x2="1140" y2="454.5"/><line x1="964" y1="227.5" x2="1140" y2="227.5"/><line x1="506.5" y1="691" x2="506.5" y2="732"/><line x1="733.5" y1="691" x2="733.5" y2="732"/></g>
<rect x="302.5" y="227.6" width="629.1" height="431.6" fill="none" stroke="#3a3aa8" stroke-width="1.8"/>
<path d="M545.3 577.5H931.6 M545.3 591.3H931.6 M545.3 613.5H931.6 M715.5 636H931.6 M545.3 577.5V659.2 M579.5 577.5V591.3 M618 577.5V613.5 M818 577.5V613.5 M674.7 591.3V613.5 M761.3 591.3V613.5 M886.7 591.3V613.5 M715.5 613.5V659.2 M852 636V659.2 M886.7 636V659.2" stroke="#111" stroke-width=".9" fill="none"/>
<g font-family="Liberation Sans" fill="#000" font-size="5.7" stroke="#000" stroke-width=".12"><text x="549" y="586">Item ref</text><text x="583" y="586">Quantity</text><text x="622" y="586">Title/Name, destination, material, dimension etc</text><text x="822" y="586.5">Article No./Reference</text><text x="549" y="598.5">Designed by</text><text x="622" y="598.5">Checked by</text><text x="689" y="598.5">Approved by - date</text><text x="768" y="599">Filename</text><text x="822" y="599">Date</text><text x="890" y="599">Scale</text><text x="811" y="609" text-anchor="end" font-size="6">file.dxf</text><text x="856" y="645">Edition</text><text x="891" y="645">Sheet</text></g>
<g font-family="Liberation Sans" fill="#111"><text x="832" y="610" font-size="9.6">01/01/2025</text><text x="926" y="610" font-size="9.5" text-anchor="end">1:1</text><text x="723" y="632" font-size="15">Title</text><text x="926" y="655" font-size="9.5" text-anchor="end">1/1</text></g>
<g stroke="#e2c060" stroke-width="1.3" stroke-dasharray="4.1 1.9" opacity=".9"><line x1="279.8" y1="155" x2="279.8" y2="732"/><line x1="95" y1="682" x2="1140" y2="682"/></g>
<circle cx="279.4" cy="681.8" r="39.5" fill="url(#ring)"/>
<g stroke="#a8a8a8" stroke-width="2"><line x1="263.4" y1="681.8" x2="294.2" y2="681.8"/><line x1="279.4" y1="666.7" x2="279.4" y2="697.5"/></g>
<circle cx="279.4" cy="681.8" r="5" fill="none" stroke="#e03a20" stroke-width="1" stroke-dasharray="2 1.5"/>
<circle cx="279.4" cy="681.8" r="1" fill="#e03a20"/>
<text x="287.7" y="700.5" font-family="Liberation Sans" font-size="13.5" fill="#f2c22a">Griglia</text>
</svg>
<!--MDIEND-->
<!--CMDSTART-->
<div class="a" style="left:72px;top:747px;width:1082px;height:2px;background:#c6c6c6"></div>
<div class="a" style="left:72px;top:749px;width:1082px;height:21px;background:#fff"></div>
<div class="a" style="left:1140px;top:749px;width:14px;height:21px;background:#f6f6f6"></div>
<div class="a" style="left:1142px;top:750px;width:8px;height:17px;background:#808080;border-radius:4px"></div>
<div class="t" style="left:77px;top:751.5px;font-size:13.6px;color:#1717d8"><i>Comando:</i> blockinsert</div>
<div class="a" style="left:72px;top:770px;width:1082px;height:1px;background:#c4c4c4"></div>
<div class="a" style="left:72px;top:771px;width:1082px;height:27px;background:#ececec"></div>
<div class="t" style="left:73px;top:779px;font-size:13px;color:#1a1a1a">Posizione:</div>
<div class="a" style="left:138px;top:776px;width:989px;height:18px;background:#fff"></div>
<div class="a" style="left:1127px;top:772px;width:26px;height:26px;background:#efefef;border:1px solid #c2c2c2"></div>
<svg class="a" style="left:1127px;top:772px" width="26" height="26" viewBox="1127 772 26 26"><rect x="1132.5" y="779.5" width="14" height="11" fill="#fff" stroke="#222" stroke-width="1"/><rect x="1132.5" y="779.5" width="14" height="3" fill="#111"/></svg>

<!--CMDEND-->
<!-- RIGHT DOCK -->
<div id="rightdock" class="a"></div>
<div id="rtb" class="a"></div>
<!--RSTART-->
<div class="a" style="left:1154px;top:107px;width:301px;height:691px;background:#e2e2e2"></div>
<div class="a" style="left:1154px;top:107.5px;width:301px;height:23px;background:linear-gradient(#ececec,#dcdcdc);border-bottom:1px solid #b8b8b8"></div>
<div class="t" style="left:1274px;top:113px;font-size:12px;color:#2a2a2a">Elenco dei blocchi</div>
<div class="a" style="left:1155.3px;top:130.5px;width:37.3px;height:25px;background:linear-gradient(#f7f7f7,#ebebeb);border:1px solid #aaaaaa"></div>
<div class="a" style="left:1193.4px;top:130.5px;width:36.2px;height:25px;background:linear-gradient(#f7f7f7,#ebebeb);border:1px solid #aaaaaa"></div>
<div class="a" style="left:1230.6px;top:130.5px;width:37.0px;height:25px;background:linear-gradient(#f7f7f7,#ebebeb);border:1px solid #aaaaaa"></div>
<div class="a" style="left:1268.7px;top:130.5px;width:35.6px;height:25px;background:linear-gradient(#f7f7f7,#ebebeb);border:1px solid #aaaaaa"></div>
<div class="a" style="left:1305.6px;top:130.5px;width:36.7px;height:25px;background:linear-gradient(#f7f7f7,#ebebeb);border:1px solid #aaaaaa"></div>
<div class="a" style="left:1343.6px;top:130.5px;width:35.7px;height:25px;background:linear-gradient(#f7f7f7,#ebebeb);border:1px solid #aaaaaa"></div>
<div class="a" style="left:1380.4px;top:130px;width:36.9px;height:27px;background:#bababa;border-radius:6px"></div>
<div class="a" style="left:1418.7px;top:130.5px;width:35.7px;height:25px;background:linear-gradient(#f7f7f7,#ebebeb);border:1px solid #aaaaaa"></div>
<div class="a" style="left:1155px;top:156.5px;width:300px;height:170.5px;background:#fff;border-top:1px solid #b4b4b4;border-bottom:1px solid #b4b4b4;border-left:1px solid #cfcfcf"></div>
<div class="a" style="left:1155.5px;top:198px;width:299px;height:20px;background:#d6d6d6"></div>
<div class="t" style="left:1205px;top:160.5px;font-size:13.6px;color:#111">Model (*Model_Space)</div>
<div class="t" style="left:1204px;top:180.5px;font-size:13.6px;color:#111">Layout1 (*Paper_Space)</div>
<div class="t" style="left:1205px;top:200.5px;font-size:13.6px;color:#111">Bordo</div>
<div class="a" style="left:1154px;top:327px;width:301px;height:23px;background:linear-gradient(#ececec,#dcdcdc);border-bottom:1px solid #b8b8b8"></div>
<div class="t" style="left:1280px;top:333px;font-size:12px;color:#2a2a2a">Elenco dei livelli</div>
<div class="a" style="left:1155.5px;top:350.5px;width:59px;height:25px;background:linear-gradient(#f7f7f7,#ebebeb);border:1px solid #aaaaaa"></div>
<div class="a" style="left:1215.5px;top:350.5px;width:59px;height:25px;background:linear-gradient(#f7f7f7,#ebebeb);border:1px solid #aaaaaa"></div>
<div class="a" style="left:1275.5px;top:350.5px;width:59px;height:25px;background:linear-gradient(#f7f7f7,#ebebeb);border:1px solid #aaaaaa"></div>
<div class="a" style="left:1335.5px;top:350.5px;width:59px;height:25px;background:linear-gradient(#f7f7f7,#ebebeb);border:1px solid #aaaaaa"></div>
<div class="a" style="left:1395.5px;top:350.5px;width:59px;height:25px;background:linear-gradient(#f7f7f7,#ebebeb);border:1px solid #aaaaaa"></div>
<div class="a" style="left:1155px;top:376px;width:300px;height:422px;background:#fff;border-top:1px solid #b4b4b4;border-right:1px solid #c8c8c8;border-left:1px solid #cfcfcf"></div>
<div class="a" style="left:1155.5px;top:397px;width:299px;height:20px;background:#0b4fd8"></div>
<div class="t" style="left:1183px;top:380.5px;font-size:13.6px;color:#111">0</div>
<div class="t" style="left:1183px;top:400.5px;font-size:13.6px;color:#fff">Bordo</div>
<div class="t" style="left:1183px;top:420.5px;font-size:13.6px;color:#111">Centro</div>
<div class="t" style="left:1183px;top:440.5px;font-size:13.6px;color:#111">Defpoints</div>
<div class="t" style="left:1183px;top:460.5px;font-size:13.6px;color:#111">Quote</div>
<div class="t" style="left:1183px;top:480.5px;font-size:13.6px;color:#111">Visibile</div>
<div class="a" style="left:1455px;top:107px;width:45px;height:691px;background:linear-gradient(90deg,#dcdcdc,#f0f0f0 8%,#e6e6e6 50%,#c6c6c6)"></div>
<div class="a" style="left:1456px;top:120.4px;width:46px;height:42.5px;background:#bdbdbd;border-radius:7px"></div>
<div class="a" style="left:1456px;top:167.7px;width:46px;height:42.3px;background:#bdbdbd;border-radius:7px"></div>
<div class="a" style="left:1456px;top:418px;width:46px;height:42.8px;background:#bdbdbd;border-radius:7px"></div>
<svg class="a" style="left:1154px;top:107px" width="346" height="691" viewBox="1154 107 346 691">
<defs><g id="eye"><path d="M-7.5 .5 Q-6 -5.3 0 -5.3 Q6 -5.3 7.5 .5 Q5 5.3 0 5.3 Q-5 5.3 -7.5 .5 Z" fill="currentColor"/><ellipse cx="0" cy=".9" rx="4.7" ry="3" fill="#fff"/><circle cx="-.3" cy="-.1" r="2.9" fill="currentColor"/><circle cx="-1" cy="-1" r=".6" fill="#888"/></g><g id="eyesel"><path d="M-7.5 .5 Q-6 -5.3 0 -5.3 Q6 -5.3 7.5 .5 Q5 5.3 0 5.3 Q-5 5.3 -7.5 .5 Z" fill="#2d3a4e"/><ellipse cx="0" cy=".9" rx="4.7" ry="3" fill="#0849d8"/><circle cx="-.3" cy="-.1" r="2.9" fill="#2d3a4e"/></g><g id="pencil"><path d="M-3.2 5.17 L5.69 -2.95 L3.27 -5.61 L-5.62 2.51 Z" fill="#e2a83c" stroke="#9a6a18" stroke-width=".6"/><path d="M5.69 -2.95 L7.91 -4.97 L5.49 -7.63 L3.27 -5.61 Z" fill="#e02828" stroke="#901010" stroke-width=".5"/><path d="M-7 6.2 L-3.2 5.17 L-5.62 2.51 Z" fill="#f0d8a0" stroke="#9a6a18" stroke-width=".5"/><path d="M-7 6.2 L-6 5.9 L-6.7 5.1 Z" fill="#222"/></g><g id="lock"><path d="M-3.5 -1 V-4 A3.5 3.5 0 0 1 3.5 -4 V-1" fill="none" stroke="currentColor" stroke-width="1.6"/><rect x="-5.2" y="-1.2" width="10.4" height="8" rx="1" fill="currentColor"/></g><g id="ttl"><circle cx="0" cy="0" r="7" fill="#6b6b6b"/></g><g id="win"><rect x=".5" y=".5" width="27" height="27" fill="#fff" stroke="#222" stroke-width="1"/><rect x=".5" y=".5" width="27" height="5" fill="#111"/><rect x="1.5" y="1.5" width="3" height="3" fill="#fff"/></g></defs>
<circle cx="1164" cy="118" r="7" fill="#6b6b6b"/><path d="M1161 115 L1167 121 M1167 115 L1161 121" stroke="#fff" stroke-width="1.8"/>
<circle cx="1182" cy="118" r="7" fill="#6b6b6b"/><rect x="1178.8" y="116.8" width="5" height="4" fill="none" stroke="#fff" stroke-width="1.1"/><path d="M1180.8 116.8 V114.5 H1186 V118.5 H1183.8" fill="none" stroke="#fff" stroke-width="1.1"/>
<circle cx="1164" cy="338" r="7" fill="#6b6b6b"/><path d="M1161 335 L1167 341 M1167 335 L1161 341" stroke="#fff" stroke-width="1.8"/>
<circle cx="1182" cy="338" r="7" fill="#6b6b6b"/><rect x="1178.8" y="336.8" width="5" height="4" fill="none" stroke="#fff" stroke-width="1.1"/><path d="M1180.8 336.8 V334.5 H1186 V338.5 H1183.8" fill="none" stroke="#fff" stroke-width="1.1"/>
<use href="#eye" x="1173.9499999999998" y="143" style="color:#0a0a0a"/>
<use href="#eye" x="1211.5" y="143" style="color:#a4a4a4"/>
<path d="M1243.1 143h12M1249.1 137v12" stroke="#e00" stroke-width="3"/>
<path d="M1280.5 143h12" stroke="#e00" stroke-width="3"/>
<text x="1316.9499999999998" y="147.6" font-family="Liberation Sans" font-size="12" fill="#111">a</text><text x="1324.9499999999998" y="147.6" font-family="Liberation Sans" font-size="12" fill="#111">b</text><line x1="1324.2499999999998" y1="136.5" x2="1324.2499999999998" y2="149.5" stroke="#111" stroke-width=".9"/>
<use href="#pencil" x="1361.4499999999998" y="143"/>
<rect x="1393.3" y="136.7" width="11.4" height="12.3" fill="#eee" stroke="#bbb" stroke-width=".6"/><path d="M1395 140 Q1395 137.5 1398 137.5 Q1401 137.5 1401 140.5 V143.5 H1403.2 L1399.5 148.5 L1395.8 143.5 H1398 V140.5 Q1398 140 1397.5 140 Z" fill="#1d5cf0"/>
<rect x="1431" y="137.7" width="10.5" height="10.5" fill="#e86e4c" stroke="#d05030" stroke-width=".6"/><path d="M1433.5 140.2 L1439 145.7 M1439 140.2 L1433.5 145.7" stroke="#fff" stroke-width="1.4"/>
<use href="#eye" x="1169" y="168" style="color:#0a0a0a"/><use href="#eye" x="1169" y="188" style="color:#0a0a0a"/><use href="#eye" x="1169" y="208" style="color:#3a4a5e"/>
<use href="#pencil" x="1191" y="188"/>
<use href="#eye" x="1185.0" y="363" style="color:#0a0a0a"/><use href="#eye" x="1245.0" y="363" style="color:#a4a4a4"/>
<path d="M1299.0 363h12M1305.0 357v12" stroke="#e00" stroke-width="3"/><path d="M1359.0 363h12" stroke="#e00" stroke-width="3"/>
<use href="#pencil" x="1425.0" y="363"/>
<rect x="1161.5" y="383" width="15.5" height="8.8" fill="#000" stroke="#000" stroke-width="1"/>
<use href="#eye" x="1423" y="387" style="color:#0a0a0a"/>
<use href="#lock" x="1444.8" y="386.5" style="color:#b6b6b6"/>
<rect x="1161.5" y="403" width="15.5" height="8.8" fill="#3a4252" stroke="#3a4252" stroke-width="1"/>
<use href="#eyesel" x="1423" y="407"/>
<use href="#lock" x="1444.8" y="406.5" style="color:#b8c4dc"/>
<rect x="1161.5" y="423" width="15.5" height="8.8" fill="#f00" stroke="#f00" stroke-width="1"/>
<use href="#eye" x="1423" y="427" style="color:#0a0a0a"/>
<use href="#lock" x="1444.8" y="426.5" style="color:#b6b6b6"/>
<rect x="1161.5" y="443" width="15.5" height="8.8" fill="#fff" stroke="#222" stroke-width="1"/>
<use href="#eye" x="1423" y="447" style="color:#0a0a0a"/>
<use href="#lock" x="1444.8" y="446.5" style="color:#b6b6b6"/>
<rect x="1161.5" y="463" width="15.5" height="8.8" fill="#0f7f7f" stroke="#0f7f7f" stroke-width="1"/>
<use href="#eye" x="1423" y="467" style="color:#0a0a0a"/>
<use href="#lock" x="1444.8" y="466.5" style="color:#b6b6b6"/>
<rect x="1161.5" y="483" width="15.5" height="8.8" fill="#000" stroke="#000" stroke-width="1"/>
<use href="#eye" x="1423" y="487" style="color:#0a0a0a"/>
<use href="#lock" x="1444.8" y="486.5" style="color:#b6b6b6"/>
<use href="#pencil" x="1401" y="406.5" opacity=".85"/>
<g fill="#a6a6a6"><rect x="1462" y="116" width="1.6" height="1.6"/><rect x="1468" y="116" width="1.6" height="1.6"/><rect x="1474" y="116" width="1.6" height="1.6"/><rect x="1480" y="116" width="1.6" height="1.6"/><rect x="1486" y="116" width="1.6" height="1.6"/><rect x="1492" y="116" width="1.6" height="1.6"/></g>
<g fill="#7a7a7a"><rect x="1456" y="262" width="1.2" height="1.2"/><rect x="1456" y="410" width="1.2" height="1.2"/><rect x="1460" y="262" width="1.2" height="1.2"/><rect x="1460" y="410" width="1.2" height="1.2"/><rect x="1464" y="262" width="1.2" height="1.2"/><rect x="1464" y="410" width="1.2" height="1.2"/><rect x="1468" y="262" width="1.2" height="1.2"/><rect x="1468" y="410" width="1.2" height="1.2"/><rect x="1472" y="262" width="1.2" height="1.2"/><rect x="1472" y="410" width="1.2" height="1.2"/><rect x="1476" y="262" width="1.2" height="1.2"/><rect x="1476" y="410" width="1.2" height="1.2"/><rect x="1480" y="262" width="1.2" height="1.2"/><rect x="1480" y="410" width="1.2" height="1.2"/><rect x="1484" y="262" width="1.2" height="1.2"/><rect x="1484" y="410" width="1.2" height="1.2"/><rect x="1488" y="262" width="1.2" height="1.2"/><rect x="1488" y="410" width="1.2" height="1.2"/><rect x="1492" y="262" width="1.2" height="1.2"/><rect x="1492" y="410" width="1.2" height="1.2"/><rect x="1496" y="262" width="1.2" height="1.2"/><rect x="1496" y="410" width="1.2" height="1.2"/></g>
<use href="#win" x="1463.2" y="127"/>
<use href="#win" x="1463.2" y="174.5"/>
<use href="#win" x="1463.2" y="221"/>
<use href="#win" x="1463.2" y="277"/>
<use href="#win" x="1463.2" y="323"/>
<use href="#win" x="1463.2" y="369"/>
<use href="#win" x="1463.2" y="425"/>
<use href="#win" x="1463.2" y="472"/>
<path d="M1470 141.5 L1478 137.8 L1478 147.8 L1470 151.5 Z" fill="#9a9a9a" stroke="#555" stroke-width=".7"/><path d="M1473.5 140.8 L1484 136.5 L1484 146.5 L1473.5 150.8 Z" fill="#f4f4f4" stroke="#555" stroke-width=".7"/><path d="M1476.5 147.5 L1481.5 139.5 L1481.5 146 Z" fill="none" stroke="#f03030" stroke-width=".9"/>
<rect x="1470.2" y="184.3" width="10.6" height="7.7" fill="#fdf3c8" stroke="#666" stroke-width=".7"/><circle cx="1479.3" cy="190.8" r="4.3" fill="#fdf3c8" fill-opacity=".85" stroke="#666" stroke-width=".7"/>
<rect x="1468" y="235" width="18" height="10" rx="2" fill="#f2f2f2" stroke="#a8c0e0" stroke-width="1"/>
<rect x="1468" y="285" width="4" height="4" fill="#111"/><rect x="1474.5" y="285.5" width="12" height="3.2" fill="none" stroke="#222" stroke-width=".8"/>
<rect x="1468" y="291" width="4" height="4" fill="#111"/><rect x="1474.5" y="291.5" width="12" height="3.2" fill="none" stroke="#222" stroke-width=".8"/>
<rect x="1468" y="297" width="4" height="4" fill="#111"/><rect x="1474.5" y="297.5" width="12" height="3.2" fill="none" stroke="#222" stroke-width=".8"/>
<path d="M1469 333 H1486 L1479.5 340 V346 L1477 347 V340 Z" fill="#999" stroke="#555" stroke-width=".6"/><ellipse cx="1477.5" cy="333.5" rx="8.5" ry="2" fill="#666"/>
<path d="M1469 377.5 L1474.5 380.5 V388.5 L1469 391.5 Z" fill="#f0f0f0" stroke="#333" stroke-width=".8"/><path d="M1474.5 381 H1482 Q1485 381 1485 385 Q1485 389 1482 389 H1474.5 Z" fill="#a8a8a8" stroke="#333" stroke-width=".7"/><rect x="1475" y="381.5" width="3" height="7" fill="#e8e8e8"/><path d="M1467 384.7 H1488" stroke="#f06060" stroke-width=".8" stroke-dasharray="1.5 1" opacity=".8"/>
<g stroke="#777" stroke-width=".9" stroke-dasharray="1.2 .6"><path d="M1466 435 h10 M1466 438.5 h9 M1466 442 h11 M1466 445.5 h11"/></g><path d="M1463.7 448.5 H1490.7" stroke="#333" stroke-width=".8"/><path d="M1466 450.8 h1.5 M1472 450.8 h14" stroke="#555" stroke-width="1.2"/>
<rect x="1470.5" y="480.3" width="12.9" height="14.6" rx="1" fill="#c08a30" stroke="#8a6020" stroke-width=".5"/><rect x="1472.3" y="482" width="9.3" height="11.2" fill="#ececec"/><path d="M1473.5 485h7M1473.5 487h7M1473.5 489h7" stroke="#bbb" stroke-width=".5"/><rect x="1474.3" y="478.6" width="5.4" height="3" rx=".8" fill="#8a8a8a"/><path d="M1478.5 493.2 L1481.6 490 V493.2 Z" fill="#999"/>
</svg>
<!--REND-->
<!-- STATUS -->
<div id="status" class="a"></div>
<!--STSTART-->
<div class="t" style="left:2.4px;top:807.5px;font-size:9.6px;letter-spacing:.12px;color:#1a1a1a">0,0</div>
<div class="t" style="left:2.4px;top:827.9px;font-size:9.6px;letter-spacing:.12px;color:#1a1a1a">@0,0</div>
<div class="a" style="left:254px;top:802px;width:1px;height:40px;background:#7a7a7a"></div>
<div class="t" style="left:256.4px;top:807.5px;font-size:9.6px;letter-spacing:.12px;color:#1a1a1a">0&lt;0°</div>
<div class="t" style="left:256.4px;top:827.9px;font-size:9.6px;letter-spacing:.12px;color:#1a1a1a">@0&lt;0°</div>
<div class="a" style="left:506px;top:818px;width:6px;height:6px;border-radius:3px;background:#c8c8c8"></div>
<div class="t" style="left:655.3px;top:816.9px;font-size:9.6px;letter-spacing:.15px;color:#1a1a1a">Posizione</div>
<svg class="a" style="left:714px;top:804px" width="24" height="34" viewBox="714 804 24 34"><path d="M717 815 Q717 806 726 806 Q735 806 735 815 L735 827 Q735 835.5 726 835.5 Q717 835.5 717 827 Z" fill="#fff" stroke="#222" stroke-width="1"/><path d="M717 817 H735 M726 806 V817" stroke="#222" stroke-width="1"/><rect x="724" y="808" width="4" height="7" rx="2" fill="#fff" stroke="#222" stroke-width=".9"/></svg>
<div class="t" style="left:754px;top:816.9px;font-size:9.6px;letter-spacing:.15px;color:#1a1a1a">Annulla</div>
<div class="a" style="left:941px;top:819px;width:6px;height:6px;border-radius:3px;background:#c8c8c8"></div>
<div class="t" style="left:949.2px;top:816.9px;font-size:9.6px;letter-spacing:.15px;color:#1a1a1a">Nessun entità selezionate.</div>
<div class="a" style="left:1269px;top:818px;width:6px;height:6px;border-radius:3px;background:#c8c8c8"></div>

<!--STEND-->
</body></html>
